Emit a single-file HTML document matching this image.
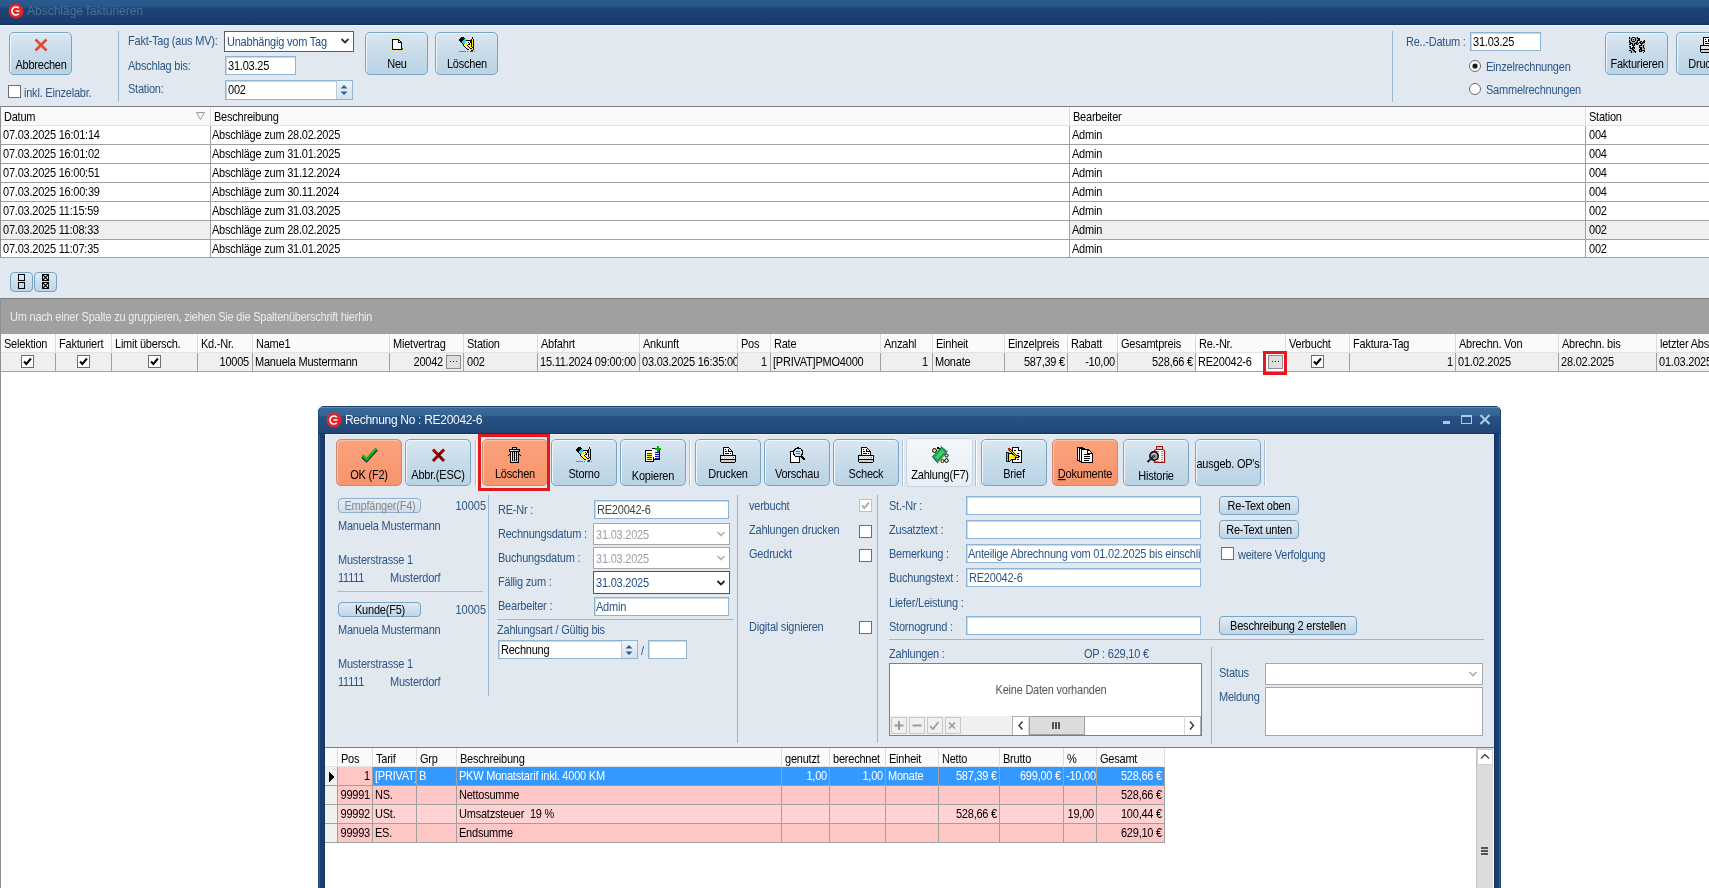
<!DOCTYPE html>
<html><head><meta charset="utf-8"><style>
*{margin:0;padding:0;box-sizing:border-box}
html,body{width:1709px;height:888px;overflow:hidden;background:#fff;position:relative}
.a{position:absolute}
.t{position:absolute;font:11px/13px "Liberation Sans",sans-serif;letter-spacing:-0.22px;white-space:nowrap;color:#000;will-change:transform;transform:scaleY(1.12);transform-origin:0 10.3px}
.btn{position:absolute;border:1px solid #7aa2c3;border-radius:5px;background:linear-gradient(#dae7f1,#c9dcea 45%,#b9d3e5);box-shadow:inset 1px 1px 0 #f2f7fb}
.obtn{position:absolute;border:1px solid #c88a74;border-radius:5px;background:linear-gradient(#fba27c,#f99b74 50%,#f7956d);box-shadow:inset 1px 1px 0 #fdc3a8}
.sbtn{position:absolute;border:1px solid #7aa2c3;border-radius:4px;background:linear-gradient(#dfeaf3,#bcd5e7)}
.inp{position:absolute;background:#fff;border:1px solid #8fb3d2;box-shadow:inset 1px 1px 0 #c8daea}
.cb{position:absolute;width:13px;height:13px;background:#fff;border:1px solid #6f6f6f}
svg{position:absolute;overflow:visible}
</style></head>
<body>
<div class="a" style="left:0px;top:0px;width:1709px;height:25px;background:linear-gradient(#2a5b8c 0,#275789 7px,#1e4374 8px,#1b3d6d 23px,#0f3366 24px,#0f3366 25px)"></div><svg style="left:8px;top:3px" width="16" height="16" viewBox="0 0 16 16"><circle cx="8" cy="8" r="7.5" fill="#e3242b"/><path d="M10.8 5.2A4 4 0 1 0 10.8 10.8" fill="none" stroke="#fff" stroke-width="1.6"/><path d="M7.5 8H11.5" stroke="#fff" stroke-width="1.4"/></svg><div class="t" style="left:27px;top:3px;font-size:12px;line-height:16px;letter-spacing:0;color:#4c7098;transform:none">Abschläge fakturieren</div><div class="a" style="left:0px;top:25px;width:1709px;height:81px;background:#e1e8f0;border-top:1px solid #eef2f7"></div><div class="btn" style="left:9px;top:32px;width:63px;height:43px"></div><svg style="left:33px;top:37px" width="16" height="16" viewBox="0 0 16 16"><path d="M2.5 2.5L13.5 13.5M13.5 2.5L2.5 13.5" stroke="#e2492e" stroke-width="2.6"/></svg><div class="t" style="left:-109.5px;width:300px;text-align:center;top:59px;">Abbrechen</div><div class="cb" style="left:8px;top:85px"></div><div class="t" style="left:24px;top:87px;color:#2b5687;">inkl. Einzelabr.</div><div class="a" style="left:118px;top:31px;width:1px;height:71px;background:#9ab6d0"></div><div class="t" style="left:128px;top:35px;color:#2b5687;">Fakt-Tag (aus MV):</div><div class="t" style="left:128px;top:60px;color:#2b5687;">Abschlag bis:</div><div class="t" style="left:128px;top:83px;color:#2b5687;">Station:</div><div class="a" style="left:224px;top:31px;width:130px;height:21px;background:#fff;border:1px solid #5e5e5e"></div><div class="t" style="left:227px;top:36px;color:#1f4e85;">Unabhängig vom Tag</div><svg style="left:340px;top:37px" width="10" height="8" viewBox="0 0 10 8"><path d="M1.5 2L5 5.5L8.5 2" fill="none" stroke="#333" stroke-width="1.8"/></svg><div class="inp" style="left:225px;top:56px;width:71px;height:19px"></div><div class="t" style="left:228px;top:60px;">31.03.25</div><div class="inp" style="left:225px;top:80px;width:128px;height:20px"></div><div class="a" style="left:336px;top:81px;width:16px;height:18px;background:linear-gradient(#eef3f8,#d6e2ee);border-left:1px solid #b9cde0"></div><svg style="left:340px;top:84px" width="8" height="12" viewBox="0 0 8 12"><path d="M0.5 4.5L4 1L7.5 4.5Z M0.5 7.5L4 11L7.5 7.5Z" fill="#2f5f91"/></svg><div class="t" style="left:228px;top:84px;">002</div><div class="btn" style="left:365px;top:32px;width:63px;height:43px"></div><svg style="left:389px;top:36px" width="16" height="15" viewBox="0 0 16 15" shape-rendering="crispEdges"><rect x="1" y="1" width="1" height="1" fill="#ffee00"/><rect x="7" y="1" width="1" height="1" fill="#ffee00"/><rect x="13" y="1" width="1" height="1" fill="#ffee00"/><rect x="2" y="2" width="1" height="1" fill="#ffee00"/><rect x="7" y="2" width="1" height="1" fill="#ffee00"/><rect x="12" y="2" width="1" height="1" fill="#ffee00"/><rect x="3" y="3" width="7" height="1" fill="#000"/><rect x="11" y="3" width="1" height="1" fill="#ffee00"/><rect x="3" y="4" width="1" height="1" fill="#000"/><rect x="4" y="4" width="5" height="1" fill="#fff"/><rect x="9" y="4" width="2" height="1" fill="#000"/><rect x="3" y="5" width="1" height="1" fill="#000"/><rect x="4" y="5" width="5" height="1" fill="#fff"/><rect x="9" y="5" width="1" height="1" fill="#000"/><rect x="10" y="5" width="1" height="1" fill="#fff"/><rect x="11" y="5" width="1" height="1" fill="#000"/><rect x="3" y="6" width="1" height="1" fill="#000"/><rect x="4" y="6" width="5" height="1" fill="#fff"/><rect x="9" y="6" width="4" height="1" fill="#000"/><rect x="1" y="7" width="2" height="1" fill="#ffee00"/><rect x="3" y="7" width="1" height="1" fill="#000"/><rect x="4" y="7" width="8" height="1" fill="#fff"/><rect x="12" y="7" width="1" height="1" fill="#000"/><rect x="13" y="7" width="2" height="1" fill="#ffee00"/><rect x="3" y="8" width="1" height="1" fill="#000"/><rect x="4" y="8" width="8" height="1" fill="#fff"/><rect x="12" y="8" width="1" height="1" fill="#000"/><rect x="3" y="9" width="1" height="1" fill="#000"/><rect x="4" y="9" width="8" height="1" fill="#fff"/><rect x="12" y="9" width="1" height="1" fill="#000"/><rect x="3" y="10" width="1" height="1" fill="#000"/><rect x="4" y="10" width="8" height="1" fill="#fff"/><rect x="12" y="10" width="1" height="1" fill="#000"/><rect x="3" y="11" width="1" height="1" fill="#000"/><rect x="4" y="11" width="8" height="1" fill="#fff"/><rect x="12" y="11" width="1" height="1" fill="#000"/><rect x="3" y="12" width="1" height="1" fill="#000"/><rect x="4" y="12" width="8" height="1" fill="#fff"/><rect x="12" y="12" width="1" height="1" fill="#000"/><rect x="13" y="12" width="1" height="1" fill="#606060"/><rect x="2" y="13" width="1" height="1" fill="#ffee00"/><rect x="3" y="13" width="10" height="1" fill="#000"/><rect x="13" y="13" width="1" height="1" fill="#606060"/><rect x="1" y="14" width="1" height="1" fill="#ffee00"/><rect x="7" y="14" width="1" height="1" fill="#ffee00"/><rect x="13" y="14" width="1" height="1" fill="#ffee00"/></svg><div class="t" style="left:247.0px;width:300px;text-align:center;top:58px;">Neu</div><div class="btn" style="left:435px;top:32px;width:63px;height:43px"></div><svg style="left:459px;top:37px" width="16" height="15" viewBox="0 0 16 15" shape-rendering="crispEdges"><rect x="2" y="0" width="3" height="1" fill="#000"/><rect x="13" y="0" width="1" height="1" fill="#000"/><rect x="1" y="1" width="5" height="1" fill="#000"/><rect x="13" y="1" width="1" height="1" fill="#000"/><rect x="0" y="2" width="5" height="1" fill="#000"/><rect x="5" y="2" width="2" height="1" fill="#00e8f0"/><rect x="12" y="2" width="1" height="1" fill="#000"/><rect x="13" y="2" width="1" height="1" fill="#ffee00"/><rect x="14" y="2" width="1" height="1" fill="#000"/><rect x="0" y="3" width="4" height="1" fill="#000"/><rect x="4" y="3" width="3" height="1" fill="#00e8f0"/><rect x="7" y="3" width="6" height="1" fill="#000"/><rect x="13" y="3" width="1" height="1" fill="#ffee00"/><rect x="14" y="3" width="1" height="1" fill="#000"/><rect x="1" y="4" width="2" height="1" fill="#000"/><rect x="3" y="4" width="4" height="1" fill="#00e8f0"/><rect x="7" y="4" width="1" height="1" fill="#ffee00"/><rect x="8" y="4" width="1" height="1" fill="#fff"/><rect x="9" y="4" width="1" height="1" fill="#ffee00"/><rect x="10" y="4" width="1" height="1" fill="#fff"/><rect x="11" y="4" width="2" height="1" fill="#000"/><rect x="13" y="4" width="1" height="1" fill="#ffee00"/><rect x="14" y="4" width="1" height="1" fill="#000"/><rect x="2" y="5" width="1" height="1" fill="#000"/><rect x="3" y="5" width="3" height="1" fill="#00e8f0"/><rect x="6" y="5" width="1" height="1" fill="#ffee00"/><rect x="7" y="5" width="1" height="1" fill="#fff"/><rect x="8" y="5" width="1" height="1" fill="#ffee00"/><rect x="9" y="5" width="1" height="1" fill="#000"/><rect x="10" y="5" width="1" height="1" fill="#fff"/><rect x="11" y="5" width="2" height="1" fill="#000"/><rect x="13" y="5" width="1" height="1" fill="#ffee00"/><rect x="14" y="5" width="1" height="1" fill="#000"/><rect x="3" y="6" width="1" height="1" fill="#000"/><rect x="4" y="6" width="2" height="1" fill="#00e8f0"/><rect x="6" y="6" width="1" height="1" fill="#fff"/><rect x="7" y="6" width="1" height="1" fill="#ffee00"/><rect x="8" y="6" width="1" height="1" fill="#fff"/><rect x="9" y="6" width="1" height="1" fill="#ffee00"/><rect x="10" y="6" width="1" height="1" fill="#000"/><rect x="11" y="6" width="1" height="1" fill="#fff"/><rect x="12" y="6" width="1" height="1" fill="#000"/><rect x="13" y="6" width="1" height="1" fill="#ffee00"/><rect x="14" y="6" width="1" height="1" fill="#000"/><rect x="4" y="7" width="1" height="1" fill="#000"/><rect x="5" y="7" width="1" height="1" fill="#ffee00"/><rect x="6" y="7" width="1" height="1" fill="#fff"/><rect x="7" y="7" width="1" height="1" fill="#ffee00"/><rect x="8" y="7" width="1" height="1" fill="#fff"/><rect x="9" y="7" width="2" height="1" fill="#000"/><rect x="11" y="7" width="1" height="1" fill="#ffee00"/><rect x="12" y="7" width="1" height="1" fill="#000"/><rect x="13" y="7" width="1" height="1" fill="#ffee00"/><rect x="14" y="7" width="1" height="1" fill="#000"/><rect x="4" y="8" width="1" height="1" fill="#000"/><rect x="5" y="8" width="1" height="1" fill="#fff"/><rect x="6" y="8" width="1" height="1" fill="#ffee00"/><rect x="7" y="8" width="1" height="1" fill="#fff"/><rect x="8" y="8" width="1" height="1" fill="#000"/><rect x="9" y="8" width="1" height="1" fill="#fff"/><rect x="10" y="8" width="1" height="1" fill="#ffee00"/><rect x="11" y="8" width="1" height="1" fill="#fff"/><rect x="12" y="8" width="1" height="1" fill="#000"/><rect x="13" y="8" width="1" height="1" fill="#ffee00"/><rect x="14" y="8" width="1" height="1" fill="#000"/><rect x="5" y="9" width="1" height="1" fill="#000"/><rect x="6" y="9" width="1" height="1" fill="#ffee00"/><rect x="7" y="9" width="1" height="1" fill="#fff"/><rect x="8" y="9" width="1" height="1" fill="#ffee00"/><rect x="9" y="9" width="1" height="1" fill="#000"/><rect x="10" y="9" width="1" height="1" fill="#fff"/><rect x="11" y="9" width="1" height="1" fill="#ffee00"/><rect x="12" y="9" width="1" height="1" fill="#000"/><rect x="13" y="9" width="1" height="1" fill="#ffee00"/><rect x="14" y="9" width="1" height="1" fill="#000"/><rect x="6" y="10" width="1" height="1" fill="#000"/><rect x="7" y="10" width="1" height="1" fill="#fff"/><rect x="8" y="10" width="1" height="1" fill="#ffee00"/><rect x="9" y="10" width="1" height="1" fill="#fff"/><rect x="10" y="10" width="1" height="1" fill="#000"/><rect x="11" y="10" width="1" height="1" fill="#ffee00"/><rect x="12" y="10" width="1" height="1" fill="#fff"/><rect x="13" y="10" width="2" height="1" fill="#000"/><rect x="7" y="11" width="1" height="1" fill="#000"/><rect x="8" y="11" width="1" height="1" fill="#ffee00"/><rect x="9" y="11" width="1" height="1" fill="#fff"/><rect x="10" y="11" width="1" height="1" fill="#ffee00"/><rect x="11" y="11" width="2" height="1" fill="#000"/><rect x="13" y="11" width="1" height="1" fill="#ffee00"/><rect x="14" y="11" width="1" height="1" fill="#000"/><rect x="8" y="12" width="2" height="1" fill="#000"/><rect x="10" y="12" width="4" height="1" fill="#ffee00"/><rect x="14" y="12" width="1" height="1" fill="#000"/><rect x="12" y="13" width="2" height="1" fill="#000"/><rect x="0" y="14" width="7" height="1" fill="#808080"/><rect x="8" y="14" width="1" height="1" fill="#808080"/><rect x="11" y="14" width="3" height="1" fill="#ff0000"/><rect x="15" y="14" width="1" height="1" fill="#808080"/></svg><div class="t" style="left:317.0px;width:300px;text-align:center;top:58px;">Löschen</div><div class="a" style="left:1392px;top:31px;width:1px;height:71px;background:#9ab6d0"></div><div class="t" style="left:1406px;top:36px;color:#2b5687;">Re..-Datum :</div><div class="inp" style="left:1470px;top:32px;width:71px;height:19px"></div><div class="t" style="left:1473px;top:36px;">31.03.25</div><svg style="left:1469px;top:60px" width="12" height="12" viewBox="0 0 12 12"><circle cx="6" cy="6" r="5.5" fill="#fff" stroke="#6a6a6a"/><circle cx="6" cy="6" r="2.6" fill="#1b1b1b"/></svg><div class="t" style="left:1486px;top:61px;color:#2b5687;">Einzelrechnungen</div><svg style="left:1469px;top:83px" width="12" height="12" viewBox="0 0 12 12"><circle cx="6" cy="6" r="5.5" fill="#fff" stroke="#6a6a6a"/></svg><div class="t" style="left:1486px;top:84px;color:#2b5687;">Sammelrechnungen</div><div class="btn" style="left:1605px;top:32px;width:63px;height:43px"></div><svg style="left:1629px;top:37px" width="16" height="16" viewBox="0 0 16 16" shape-rendering="crispEdges"><rect x="0" y="0" width="1" height="1" fill="#000"/><rect x="1" y="0" width="1" height="1" fill="#a8a8a8"/><rect x="2" y="0" width="1" height="1" fill="#e0e0e0"/><rect x="3" y="0" width="3" height="1" fill="#000"/><rect x="6" y="0" width="2" height="1" fill="#a8a8a8"/><rect x="8" y="0" width="1" height="1" fill="#000"/><rect x="0" y="1" width="1" height="1" fill="#000"/><rect x="1" y="1" width="1" height="1" fill="#a8a8a8"/><rect x="2" y="1" width="1" height="1" fill="#000"/><rect x="3" y="1" width="1" height="1" fill="#a8a8a8"/><rect x="4" y="1" width="1" height="1" fill="#e0e0e0"/><rect x="5" y="1" width="1" height="1" fill="#a8a8a8"/><rect x="6" y="1" width="1" height="1" fill="#000"/><rect x="7" y="1" width="1" height="1" fill="#a8a8a8"/><rect x="8" y="1" width="3" height="1" fill="#000"/><rect x="0" y="2" width="2" height="1" fill="#a8a8a8"/><rect x="2" y="2" width="1" height="1" fill="#000"/><rect x="3" y="2" width="1" height="1" fill="#a8a8a8"/><rect x="4" y="2" width="1" height="1" fill="#000"/><rect x="5" y="2" width="1" height="1" fill="#a8a8a8"/><rect x="6" y="2" width="1" height="1" fill="#000"/><rect x="7" y="2" width="2" height="1" fill="#a8a8a8"/><rect x="9" y="2" width="2" height="1" fill="#000"/><rect x="0" y="3" width="1" height="1" fill="#000"/><rect x="1" y="3" width="1" height="1" fill="#a8a8a8"/><rect x="2" y="3" width="1" height="1" fill="#000"/><rect x="3" y="3" width="3" height="1" fill="#a8a8a8"/><rect x="6" y="3" width="1" height="1" fill="#000"/><rect x="7" y="3" width="1" height="1" fill="#a8a8a8"/><rect x="8" y="3" width="3" height="1" fill="#000"/><rect x="15" y="3" width="1" height="1" fill="#000"/><rect x="0" y="4" width="1" height="1" fill="#000"/><rect x="1" y="4" width="2" height="1" fill="#a8a8a8"/><rect x="3" y="4" width="3" height="1" fill="#000"/><rect x="6" y="4" width="2" height="1" fill="#a8a8a8"/><rect x="8" y="4" width="1" height="1" fill="#000"/><rect x="11" y="4" width="2" height="1" fill="#000"/><rect x="14" y="4" width="2" height="1" fill="#000"/><rect x="0" y="5" width="2" height="1" fill="#000"/><rect x="2" y="5" width="5" height="1" fill="#a8a8a8"/><rect x="7" y="5" width="2" height="1" fill="#000"/><rect x="10" y="5" width="2" height="1" fill="#000"/><rect x="12" y="5" width="1" height="1" fill="#a8a8a8"/><rect x="13" y="5" width="3" height="1" fill="#000"/><rect x="0" y="6" width="1" height="1" fill="#a8a8a8"/><rect x="1" y="6" width="3" height="1" fill="#000"/><rect x="4" y="6" width="1" height="1" fill="#a8a8a8"/><rect x="5" y="6" width="3" height="1" fill="#000"/><rect x="8" y="6" width="1" height="1" fill="#a8a8a8"/><rect x="9" y="6" width="1" height="1" fill="#000"/><rect x="11" y="6" width="3" height="1" fill="#000"/><rect x="14" y="6" width="2" height="1" fill="#a8a8a8"/><rect x="0" y="7" width="2" height="1" fill="#000"/><rect x="3" y="7" width="1" height="1" fill="#000"/><rect x="4" y="7" width="1" height="1" fill="#a8a8a8"/><rect x="5" y="7" width="1" height="1" fill="#000"/><rect x="7" y="7" width="2" height="1" fill="#000"/><rect x="9" y="7" width="1" height="1" fill="#a8a8a8"/><rect x="12" y="7" width="1" height="1" fill="#000"/><rect x="13" y="7" width="1" height="1" fill="#a8a8a8"/><rect x="14" y="7" width="1" height="1" fill="#d8d8d8"/><rect x="15" y="7" width="1" height="1" fill="#a8a8a8"/><rect x="3" y="8" width="3" height="1" fill="#000"/><rect x="10" y="8" width="3" height="1" fill="#000"/><rect x="13" y="8" width="1" height="1" fill="#a8a8a8"/><rect x="14" y="8" width="1" height="1" fill="#000"/><rect x="15" y="8" width="1" height="1" fill="#a8a8a8"/><rect x="0" y="9" width="2" height="1" fill="#000"/><rect x="4" y="9" width="1" height="1" fill="#000"/><rect x="10" y="9" width="1" height="1" fill="#000"/><rect x="11" y="9" width="3" height="1" fill="#a8a8a8"/><rect x="14" y="9" width="1" height="1" fill="#000"/><rect x="15" y="9" width="1" height="1" fill="#d8d8d8"/><rect x="0" y="10" width="1" height="1" fill="#a8a8a8"/><rect x="1" y="10" width="1" height="1" fill="#000"/><rect x="3" y="10" width="3" height="1" fill="#000"/><rect x="10" y="10" width="3" height="1" fill="#000"/><rect x="13" y="10" width="1" height="1" fill="#a8a8a8"/><rect x="14" y="10" width="1" height="1" fill="#000"/><rect x="15" y="10" width="1" height="1" fill="#a8a8a8"/><rect x="0" y="11" width="1" height="1" fill="#a8a8a8"/><rect x="1" y="11" width="3" height="1" fill="#000"/><rect x="4" y="11" width="1" height="1" fill="#a8a8a8"/><rect x="5" y="11" width="1" height="1" fill="#000"/><rect x="11" y="11" width="2" height="1" fill="#000"/><rect x="13" y="11" width="2" height="1" fill="#a8a8a8"/><rect x="15" y="11" width="1" height="1" fill="#000"/><rect x="0" y="12" width="1" height="1" fill="#d8d8d8"/><rect x="1" y="12" width="2" height="1" fill="#a8a8a8"/><rect x="3" y="12" width="2" height="1" fill="#000"/><rect x="10" y="12" width="3" height="1" fill="#000"/><rect x="13" y="12" width="3" height="1" fill="#a8a8a8"/><rect x="0" y="13" width="2" height="1" fill="#000"/><rect x="2" y="13" width="2" height="1" fill="#a8a8a8"/><rect x="4" y="13" width="2" height="1" fill="#000"/><rect x="10" y="13" width="1" height="1" fill="#000"/><rect x="11" y="13" width="1" height="1" fill="#a8a8a8"/><rect x="12" y="13" width="4" height="1" fill="#000"/><rect x="0" y="14" width="1" height="1" fill="#d8d8d8"/><rect x="1" y="14" width="1" height="1" fill="#a8a8a8"/><rect x="2" y="14" width="1" height="1" fill="#000"/><rect x="3" y="14" width="2" height="1" fill="#a8a8a8"/><rect x="5" y="14" width="2" height="1" fill="#000"/><rect x="10" y="14" width="3" height="1" fill="#000"/><rect x="15" y="14" width="1" height="1" fill="#000"/><rect x="0" y="15" width="1" height="1" fill="#d8d8d8"/><rect x="1" y="15" width="1" height="1" fill="#a8a8a8"/><rect x="2" y="15" width="1" height="1" fill="#000"/><rect x="3" y="15" width="3" height="1" fill="#a8a8a8"/><rect x="6" y="15" width="1" height="1" fill="#000"/><rect x="14" y="15" width="1" height="1" fill="#000"/></svg><div class="t" style="left:1486.5px;width:300px;text-align:center;top:58px;">Fakturieren</div><div class="btn" style="left:1676px;top:32px;width:63px;height:43px"></div><svg style="left:1700px;top:37px" width="16" height="16" viewBox="0 0 16 16" shape-rendering="crispEdges"><rect x="3" y="0" width="6" height="1" fill="#000"/><rect x="3" y="1" width="1" height="1" fill="#000"/><rect x="4" y="1" width="5" height="1" fill="#fff"/><rect x="9" y="1" width="1" height="1" fill="#000"/><rect x="3" y="2" width="1" height="1" fill="#000"/><rect x="4" y="2" width="1" height="1" fill="#fff"/><rect x="5" y="2" width="1" height="1" fill="#000"/><rect x="6" y="2" width="2" height="1" fill="#fff"/><rect x="8" y="2" width="1" height="1" fill="#000"/><rect x="9" y="2" width="1" height="1" fill="#fff"/><rect x="10" y="2" width="1" height="1" fill="#000"/><rect x="3" y="3" width="1" height="1" fill="#000"/><rect x="4" y="3" width="4" height="1" fill="#fff"/><rect x="8" y="3" width="1" height="1" fill="#000"/><rect x="9" y="3" width="2" height="1" fill="#fff"/><rect x="11" y="3" width="1" height="1" fill="#000"/><rect x="3" y="4" width="1" height="1" fill="#000"/><rect x="4" y="4" width="1" height="1" fill="#fff"/><rect x="5" y="4" width="2" height="1" fill="#000"/><rect x="7" y="4" width="1" height="1" fill="#fff"/><rect x="8" y="4" width="5" height="1" fill="#000"/><rect x="3" y="5" width="1" height="1" fill="#000"/><rect x="4" y="5" width="8" height="1" fill="#fff"/><rect x="12" y="5" width="1" height="1" fill="#000"/><rect x="3" y="6" width="1" height="1" fill="#000"/><rect x="4" y="6" width="1" height="1" fill="#fff"/><rect x="5" y="6" width="4" height="1" fill="#000"/><rect x="9" y="6" width="1" height="1" fill="#fff"/><rect x="10" y="6" width="1" height="1" fill="#000"/><rect x="11" y="6" width="1" height="1" fill="#fff"/><rect x="12" y="6" width="1" height="1" fill="#000"/><rect x="3" y="7" width="1" height="1" fill="#000"/><rect x="4" y="7" width="8" height="1" fill="#fff"/><rect x="12" y="7" width="1" height="1" fill="#000"/><rect x="0" y="8" width="16" height="1" fill="#000"/><rect x="0" y="9" width="1" height="1" fill="#000"/><rect x="1" y="9" width="1" height="1" fill="#fff"/><rect x="2" y="9" width="1" height="1" fill="#c8c8c8"/><rect x="3" y="9" width="1" height="1" fill="#fff"/><rect x="4" y="9" width="1" height="1" fill="#c8c8c8"/><rect x="5" y="9" width="1" height="1" fill="#fff"/><rect x="6" y="9" width="1" height="1" fill="#c8c8c8"/><rect x="7" y="9" width="1" height="1" fill="#fff"/><rect x="8" y="9" width="1" height="1" fill="#c8c8c8"/><rect x="9" y="9" width="1" height="1" fill="#fff"/><rect x="10" y="9" width="1" height="1" fill="#c8c8c8"/><rect x="11" y="9" width="1" height="1" fill="#fff"/><rect x="12" y="9" width="1" height="1" fill="#c8c8c8"/><rect x="13" y="9" width="2" height="1" fill="#fff"/><rect x="15" y="9" width="1" height="1" fill="#000"/><rect x="0" y="10" width="1" height="1" fill="#000"/><rect x="1" y="10" width="1" height="1" fill="#c8c8c8"/><rect x="2" y="10" width="1" height="1" fill="#fff"/><rect x="3" y="10" width="1" height="1" fill="#c8c8c8"/><rect x="4" y="10" width="1" height="1" fill="#fff"/><rect x="5" y="10" width="1" height="1" fill="#c8c8c8"/><rect x="6" y="10" width="1" height="1" fill="#fff"/><rect x="7" y="10" width="1" height="1" fill="#c8c8c8"/><rect x="8" y="10" width="1" height="1" fill="#fff"/><rect x="9" y="10" width="1" height="1" fill="#c8c8c8"/><rect x="10" y="10" width="1" height="1" fill="#fff"/><rect x="11" y="10" width="1" height="1" fill="#c8c8c8"/><rect x="12" y="10" width="1" height="1" fill="#fff"/><rect x="13" y="10" width="1" height="1" fill="#ff0000"/><rect x="14" y="10" width="1" height="1" fill="#fff"/><rect x="15" y="10" width="1" height="1" fill="#000"/><rect x="0" y="11" width="1" height="1" fill="#000"/><rect x="1" y="11" width="1" height="1" fill="#fff"/><rect x="2" y="11" width="1" height="1" fill="#c8c8c8"/><rect x="3" y="11" width="1" height="1" fill="#fff"/><rect x="4" y="11" width="1" height="1" fill="#c8c8c8"/><rect x="5" y="11" width="1" height="1" fill="#fff"/><rect x="6" y="11" width="1" height="1" fill="#c8c8c8"/><rect x="7" y="11" width="1" height="1" fill="#fff"/><rect x="8" y="11" width="1" height="1" fill="#c8c8c8"/><rect x="9" y="11" width="1" height="1" fill="#fff"/><rect x="10" y="11" width="1" height="1" fill="#c8c8c8"/><rect x="11" y="11" width="1" height="1" fill="#fff"/><rect x="12" y="11" width="1" height="1" fill="#c8c8c8"/><rect x="13" y="11" width="2" height="1" fill="#fff"/><rect x="15" y="11" width="1" height="1" fill="#000"/><rect x="0" y="12" width="16" height="1" fill="#000"/><rect x="0" y="13" width="1" height="1" fill="#000"/><rect x="1" y="13" width="14" height="1" fill="#d0d0d0"/><rect x="15" y="13" width="1" height="1" fill="#000"/><rect x="0" y="14" width="1" height="1" fill="#000"/><rect x="1" y="14" width="14" height="1" fill="#d0d0d0"/><rect x="15" y="14" width="1" height="1" fill="#000"/><rect x="1" y="15" width="14" height="1" fill="#000"/></svg><div class="t" style="left:1557.5px;width:300px;text-align:center;top:58px;">Drucken</div><div class="a" style="left:0px;top:106px;width:1709px;height:152px;background:#fff"></div><div class="a" style="left:0px;top:106px;width:1709px;height:1px;background:#7b8087"></div><div class="a" style="left:0px;top:106px;width:1px;height:782px;background:#8a8f96"></div><div class="a" style="left:1px;top:107px;width:1708px;height:18px;background:#fafafa"></div><div class="a" style="left:1px;top:125px;width:1708px;height:1px;background:#e3e3e3"></div><div class="t" style="left:4px;top:111px;">Datum</div><div class="a" style="left:210px;top:107px;width:1px;height:18px;background:#dcdcdc"></div><div class="a" style="left:211px;top:107px;width:1px;height:18px;background:#ffffff"></div><div class="t" style="left:214px;top:111px;">Beschreibung</div><div class="a" style="left:1069px;top:107px;width:1px;height:18px;background:#dcdcdc"></div><div class="a" style="left:1070px;top:107px;width:1px;height:18px;background:#ffffff"></div><div class="t" style="left:1073px;top:111px;">Bearbeiter</div><div class="a" style="left:1585px;top:107px;width:1px;height:18px;background:#dcdcdc"></div><div class="a" style="left:1586px;top:107px;width:1px;height:18px;background:#ffffff"></div><div class="t" style="left:1589px;top:111px;">Station</div><svg style="left:196px;top:112px" width="9" height="8" viewBox="0 0 9 8"><path d="M0.5 0.5H8.5L4.5 7.5Z" fill="none" stroke="#9a9a9a"/></svg><div class="a" style="left:1px;top:144px;width:1708px;height:1px;background:#a0a0a0"></div><div class="t" style="left:3px;top:129px;">07.03.2025 16:01:14</div><div class="t" style="left:212px;top:129px;">Abschläge zum 28.02.2025</div><div class="t" style="left:1072px;top:129px;">Admin</div><div class="t" style="left:1589px;top:129px;">004</div><div class="a" style="left:1px;top:163px;width:1708px;height:1px;background:#a0a0a0"></div><div class="t" style="left:3px;top:148px;">07.03.2025 16:01:02</div><div class="t" style="left:212px;top:148px;">Abschläge zum 31.01.2025</div><div class="t" style="left:1072px;top:148px;">Admin</div><div class="t" style="left:1589px;top:148px;">004</div><div class="a" style="left:1px;top:182px;width:1708px;height:1px;background:#a0a0a0"></div><div class="t" style="left:3px;top:167px;">07.03.2025 16:00:51</div><div class="t" style="left:212px;top:167px;">Abschläge zum 31.12.2024</div><div class="t" style="left:1072px;top:167px;">Admin</div><div class="t" style="left:1589px;top:167px;">004</div><div class="a" style="left:1px;top:201px;width:1708px;height:1px;background:#a0a0a0"></div><div class="t" style="left:3px;top:186px;">07.03.2025 16:00:39</div><div class="t" style="left:212px;top:186px;">Abschläge zum 30.11.2024</div><div class="t" style="left:1072px;top:186px;">Admin</div><div class="t" style="left:1589px;top:186px;">004</div><div class="a" style="left:1px;top:220px;width:1708px;height:1px;background:#a0a0a0"></div><div class="t" style="left:3px;top:205px;">07.03.2025 11:15:59</div><div class="t" style="left:212px;top:205px;">Abschläge zum 31.03.2025</div><div class="t" style="left:1072px;top:205px;">Admin</div><div class="t" style="left:1589px;top:205px;">002</div><div class="a" style="left:1px;top:221px;width:209px;height:18px;background:#efefef"></div><div class="a" style="left:1070px;top:221px;width:639px;height:18px;background:#efefef"></div><div class="a" style="left:1px;top:239px;width:1708px;height:1px;background:#a0a0a0"></div><div class="t" style="left:3px;top:224px;">07.03.2025 11:08:33</div><div class="t" style="left:212px;top:224px;">Abschläge zum 28.02.2025</div><div class="t" style="left:1072px;top:224px;">Admin</div><div class="t" style="left:1589px;top:224px;">002</div><div class="a" style="left:1px;top:258px;width:1708px;height:1px;background:#a0a0a0"></div><div class="t" style="left:3px;top:243px;">07.03.2025 11:07:35</div><div class="t" style="left:212px;top:243px;">Abschläge zum 31.01.2025</div><div class="t" style="left:1072px;top:243px;">Admin</div><div class="t" style="left:1589px;top:243px;">002</div><div class="a" style="left:210px;top:126px;width:1px;height:132px;background:#a0a0a0"></div><div class="a" style="left:1069px;top:126px;width:1px;height:132px;background:#a0a0a0"></div><div class="a" style="left:1585px;top:126px;width:1px;height:132px;background:#a0a0a0"></div><div class="a" style="left:0px;top:257px;width:1709px;height:1px;background:#a0a0a0"></div><div class="a" style="left:0px;top:258px;width:1709px;height:40px;background:#e1e8f0"></div><div class="sbtn" style="left:10px;top:272px;width:23px;height:20px"></div><svg style="left:17px;top:274px" width="9" height="16" viewBox="0 0 9 16" shape-rendering="crispEdges"><rect x="1.5" y="0.5" width="6" height="6" fill="none" stroke="#000"/><rect x="1.5" y="8.5" width="6" height="6" fill="none" stroke="#000"/></svg><div class="sbtn" style="left:34px;top:272px;width:23px;height:20px"></div><svg style="left:41px;top:274px" width="9" height="16" viewBox="0 0 9 16" shape-rendering="crispEdges"><rect x="1" y="0" width="7" height="7" fill="#000"/><rect x="2" y="1" width="5" height="5" fill="#fff"/><path d="M2 1L7 6M7 1L2 6" stroke="#000" stroke-width="1.2" shape-rendering="auto"/><rect x="1" y="8" width="7" height="7" fill="#000"/><rect x="2" y="9" width="5" height="5" fill="#fff"/><path d="M2 9L7 14M7 9L2 14" stroke="#000" stroke-width="1.2" shape-rendering="auto"/></svg><div class="a" style="left:0px;top:298px;width:1709px;height:36px;background:#a0a0a0;border-top:1px solid #7d7d7d"></div><div class="t" style="left:10px;top:311px;color:#ececec;">Um nach einer Spalte zu gruppieren, ziehen Sie die Spaltenüberschrift hierhin</div><div class="a" style="left:1px;top:334px;width:1708px;height:18px;background:#fafafa"></div><div class="a" style="left:1px;top:352px;width:1708px;height:1px;background:#e3e3e3"></div><div class="a" style="left:1px;top:353px;width:1708px;height:18px;background:#efefef"></div><div class="a" style="left:1px;top:371px;width:1708px;height:1px;background:#a0a0a0"></div><div class="a" style="left:0px;top:298px;width:1px;height:590px;background:#8a8f96"></div><div class="t" style="left:4px;top:338px;">Selektion</div><div class="t" style="left:59px;top:338px;">Fakturiert</div><div class="t" style="left:115px;top:338px;">Limit übersch.</div><div class="t" style="left:201px;top:338px;">Kd.-Nr.</div><div class="t" style="left:256px;top:338px;">Name1</div><div class="t" style="left:393px;top:338px;">Mietvertrag</div><div class="t" style="left:467px;top:338px;">Station</div><div class="t" style="left:541px;top:338px;">Abfahrt</div><div class="t" style="left:643px;top:338px;">Ankunft</div><div class="t" style="left:741px;top:338px;">Pos</div><div class="t" style="left:774px;top:338px;">Rate</div><div class="t" style="left:884px;top:338px;">Anzahl</div><div class="t" style="left:936px;top:338px;">Einheit</div><div class="t" style="left:1008px;top:338px;">Einzelpreis</div><div class="t" style="left:1071px;top:338px;">Rabatt</div><div class="t" style="left:1121px;top:338px;">Gesamtpreis</div><div class="t" style="left:1199px;top:338px;">Re.-Nr.</div><div class="t" style="left:1289px;top:338px;">Verbucht</div><div class="t" style="left:1353px;top:338px;">Faktura-Tag</div><div class="t" style="left:1459px;top:338px;">Abrechn. Von</div><div class="t" style="left:1562px;top:338px;">Abrechn. bis</div><div class="t" style="left:1660px;top:338px;">letzter Abs</div><div class="a" style="left:55px;top:334px;width:1px;height:18px;background:#dcdcdc"></div><div class="a" style="left:56px;top:334px;width:1px;height:18px;background:#ffffff"></div><div class="a" style="left:55px;top:353px;width:1px;height:18px;background:#a0a0a0"></div><div class="a" style="left:111px;top:334px;width:1px;height:18px;background:#dcdcdc"></div><div class="a" style="left:112px;top:334px;width:1px;height:18px;background:#ffffff"></div><div class="a" style="left:111px;top:353px;width:1px;height:18px;background:#a0a0a0"></div><div class="a" style="left:197px;top:334px;width:1px;height:18px;background:#dcdcdc"></div><div class="a" style="left:198px;top:334px;width:1px;height:18px;background:#ffffff"></div><div class="a" style="left:197px;top:353px;width:1px;height:18px;background:#a0a0a0"></div><div class="a" style="left:252px;top:334px;width:1px;height:18px;background:#dcdcdc"></div><div class="a" style="left:253px;top:334px;width:1px;height:18px;background:#ffffff"></div><div class="a" style="left:252px;top:353px;width:1px;height:18px;background:#a0a0a0"></div><div class="a" style="left:389px;top:334px;width:1px;height:18px;background:#dcdcdc"></div><div class="a" style="left:390px;top:334px;width:1px;height:18px;background:#ffffff"></div><div class="a" style="left:389px;top:353px;width:1px;height:18px;background:#a0a0a0"></div><div class="a" style="left:463px;top:334px;width:1px;height:18px;background:#dcdcdc"></div><div class="a" style="left:464px;top:334px;width:1px;height:18px;background:#ffffff"></div><div class="a" style="left:463px;top:353px;width:1px;height:18px;background:#a0a0a0"></div><div class="a" style="left:537px;top:334px;width:1px;height:18px;background:#dcdcdc"></div><div class="a" style="left:538px;top:334px;width:1px;height:18px;background:#ffffff"></div><div class="a" style="left:537px;top:353px;width:1px;height:18px;background:#a0a0a0"></div><div class="a" style="left:639px;top:334px;width:1px;height:18px;background:#dcdcdc"></div><div class="a" style="left:640px;top:334px;width:1px;height:18px;background:#ffffff"></div><div class="a" style="left:639px;top:353px;width:1px;height:18px;background:#a0a0a0"></div><div class="a" style="left:737px;top:334px;width:1px;height:18px;background:#dcdcdc"></div><div class="a" style="left:738px;top:334px;width:1px;height:18px;background:#ffffff"></div><div class="a" style="left:737px;top:353px;width:1px;height:18px;background:#a0a0a0"></div><div class="a" style="left:770px;top:334px;width:1px;height:18px;background:#dcdcdc"></div><div class="a" style="left:771px;top:334px;width:1px;height:18px;background:#ffffff"></div><div class="a" style="left:770px;top:353px;width:1px;height:18px;background:#a0a0a0"></div><div class="a" style="left:880px;top:334px;width:1px;height:18px;background:#dcdcdc"></div><div class="a" style="left:881px;top:334px;width:1px;height:18px;background:#ffffff"></div><div class="a" style="left:880px;top:353px;width:1px;height:18px;background:#a0a0a0"></div><div class="a" style="left:932px;top:334px;width:1px;height:18px;background:#dcdcdc"></div><div class="a" style="left:933px;top:334px;width:1px;height:18px;background:#ffffff"></div><div class="a" style="left:932px;top:353px;width:1px;height:18px;background:#a0a0a0"></div><div class="a" style="left:1004px;top:334px;width:1px;height:18px;background:#dcdcdc"></div><div class="a" style="left:1005px;top:334px;width:1px;height:18px;background:#ffffff"></div><div class="a" style="left:1004px;top:353px;width:1px;height:18px;background:#a0a0a0"></div><div class="a" style="left:1067px;top:334px;width:1px;height:18px;background:#dcdcdc"></div><div class="a" style="left:1068px;top:334px;width:1px;height:18px;background:#ffffff"></div><div class="a" style="left:1067px;top:353px;width:1px;height:18px;background:#a0a0a0"></div><div class="a" style="left:1117px;top:334px;width:1px;height:18px;background:#dcdcdc"></div><div class="a" style="left:1118px;top:334px;width:1px;height:18px;background:#ffffff"></div><div class="a" style="left:1117px;top:353px;width:1px;height:18px;background:#a0a0a0"></div><div class="a" style="left:1195px;top:334px;width:1px;height:18px;background:#dcdcdc"></div><div class="a" style="left:1196px;top:334px;width:1px;height:18px;background:#ffffff"></div><div class="a" style="left:1195px;top:353px;width:1px;height:18px;background:#a0a0a0"></div><div class="a" style="left:1285px;top:334px;width:1px;height:18px;background:#dcdcdc"></div><div class="a" style="left:1286px;top:334px;width:1px;height:18px;background:#ffffff"></div><div class="a" style="left:1285px;top:353px;width:1px;height:18px;background:#a0a0a0"></div><div class="a" style="left:1349px;top:334px;width:1px;height:18px;background:#dcdcdc"></div><div class="a" style="left:1350px;top:334px;width:1px;height:18px;background:#ffffff"></div><div class="a" style="left:1349px;top:353px;width:1px;height:18px;background:#a0a0a0"></div><div class="a" style="left:1455px;top:334px;width:1px;height:18px;background:#dcdcdc"></div><div class="a" style="left:1456px;top:334px;width:1px;height:18px;background:#ffffff"></div><div class="a" style="left:1455px;top:353px;width:1px;height:18px;background:#a0a0a0"></div><div class="a" style="left:1558px;top:334px;width:1px;height:18px;background:#dcdcdc"></div><div class="a" style="left:1559px;top:334px;width:1px;height:18px;background:#ffffff"></div><div class="a" style="left:1558px;top:353px;width:1px;height:18px;background:#a0a0a0"></div><div class="a" style="left:1656px;top:334px;width:1px;height:18px;background:#dcdcdc"></div><div class="a" style="left:1657px;top:334px;width:1px;height:18px;background:#ffffff"></div><div class="a" style="left:1656px;top:353px;width:1px;height:18px;background:#a0a0a0"></div><div class="a" style="left:1196px;top:353px;width:89px;height:18px;background:#fff"></div><div class="cb" style="left:21px;top:355px"></div><svg style="left:21px;top:355px" width="13" height="13" viewBox="0 0 13 13"><path d="M3 6.5L5.3 9L10 3.5" fill="none" stroke="#000" stroke-width="2"/></svg><div class="cb" style="left:77px;top:355px"></div><svg style="left:77px;top:355px" width="13" height="13" viewBox="0 0 13 13"><path d="M3 6.5L5.3 9L10 3.5" fill="none" stroke="#000" stroke-width="2"/></svg><div class="cb" style="left:148px;top:355px"></div><svg style="left:148px;top:355px" width="13" height="13" viewBox="0 0 13 13"><path d="M3 6.5L5.3 9L10 3.5" fill="none" stroke="#000" stroke-width="2"/></svg><div class="cb" style="left:1311px;top:355px"></div><svg style="left:1311px;top:355px" width="13" height="13" viewBox="0 0 13 13"><path d="M3 6.5L5.3 9L10 3.5" fill="none" stroke="#000" stroke-width="2"/></svg><div class="t" style="left:-51px;width:300px;text-align:right;top:356px;">10005</div><div class="t" style="left:255px;top:356px;">Manuela Mustermann</div><div class="t" style="left:143px;width:300px;text-align:right;top:356px;">20042</div><div class="a" style="left:446px;top:355px;width:15px;height:14px;background:#dedede;border:1px solid #8c8c8c"></div><svg style="left:450px;top:361px" width="8" height="1" shape-rendering="crispEdges"><rect x="0" width="1" height="1" fill="#222"/><rect x="3" width="1" height="1" fill="#222"/><rect x="6" width="1" height="1" fill="#222"/></svg><div class="t" style="left:467px;top:356px;">002</div><div class="a" style="left:538px;top:353px;width:101px;height:18px;overflow:hidden"><div class="t" style="left:2px;top:3px">15.11.2024 09:00:00</div></div><div class="a" style="left:640px;top:353px;width:97px;height:18px;overflow:hidden"><div class="t" style="left:2px;top:3px">03.03.2025 16:35:00</div></div><div class="t" style="left:467px;width:300px;text-align:right;top:356px;">1</div><div class="t" style="left:773px;top:356px;">[PRIVAT]PMO4000</div><div class="t" style="left:628px;width:300px;text-align:right;top:356px;">1</div><div class="t" style="left:935px;top:356px;">Monate</div><div class="t" style="left:765px;width:300px;text-align:right;top:356px;">587,39 €</div><div class="t" style="left:815px;width:300px;text-align:right;top:356px;">-10,00</div><div class="t" style="left:893px;width:300px;text-align:right;top:356px;">528,66 €</div><div class="t" style="left:1198px;top:356px;">RE20042-6</div><div class="a" style="left:1268px;top:355px;width:15px;height:14px;background:#dedede;border:1px solid #8c8c8c"></div><svg style="left:1272px;top:361px" width="8" height="1" shape-rendering="crispEdges"><rect x="0" width="1" height="1" fill="#222"/><rect x="3" width="1" height="1" fill="#222"/><rect x="6" width="1" height="1" fill="#222"/></svg><div class="a" style="left:1263px;top:351px;width:24px;height:24px;border:3px solid #e5171f"></div><div class="t" style="left:1153px;width:300px;text-align:right;top:356px;">1</div><div class="t" style="left:1458px;top:356px;">01.02.2025</div><div class="t" style="left:1561px;top:356px;">28.02.2025</div><div class="t" style="left:1659px;top:356px;">01.03.2025</div>
<div class="a" style="left:318px;top:406px;width:1183px;height:482px;background:#1b3d6b;border-radius:6px 6px 0 0;overflow:hidden"><div class="a" style="left:0;top:0;width:1183px;height:28px;background:linear-gradient(#1e3f6a 0,#1e3f6a 1px,#5a8ab8 1px,#5a8ab8 2px,#3a6a9a 2px,#346492 10px,#275485 10px,#1f4576 27px,#0f3366 27px)"></div><div class="a" style="left:0;top:0;width:1px;height:482px;background:#1c4577"></div><div class="a" style="left:1px;top:28px;width:1px;height:454px;background:#2f5f91"></div><div class="a" style="left:6px;top:28px;width:1px;height:454px;background:#0f3366"></div><div class="a" style="left:1176px;top:28px;width:1px;height:454px;background:#0f3366"></div><div class="a" style="left:1181px;top:28px;width:1px;height:454px;background:#2f5f91"></div><div class="a" style="left:1182px;top:0px;width:1px;height:482px;background:#1c4577"></div></div><svg style="left:326px;top:412px" width="16" height="16" viewBox="0 0 16 16"><circle cx="8" cy="8" r="7.5" fill="#e3242b"/><path d="M10.8 5.2A4 4 0 1 0 10.8 10.8" fill="none" stroke="#fff" stroke-width="1.6"/><path d="M7.5 8H11.5" stroke="#fff" stroke-width="1.4"/></svg><div class="t" style="left:345px;top:412px;font-size:12px;line-height:16px;letter-spacing:-0.3px;color:#f4f8fc;transform:none">Rechnung No : RE20042-6</div><svg style="left:1440px;top:412px" width="54" height="16" viewBox="0 0 54 16" shape-rendering="crispEdges"><rect x="3" y="9" width="7" height="3" fill="#a9cbe9"/><rect x="21.5" y="3.5" width="10" height="8" fill="none" stroke="#a9cbe9"/><rect x="21" y="3" width="11" height="2" fill="#a9cbe9"/></svg><svg style="left:1479px;top:414px" width="12" height="11" viewBox="0 0 12 11"><path d="M1.5 1L10.5 10M10.5 1L1.5 10" stroke="#a9cbe9" stroke-width="2.2"/></svg><div class="a" style="left:325px;top:434px;width:1169px;height:454px;background:#e1e8f0;border-top:1px solid #eef2f7;border-left:1px solid #eef2f7"></div><div class="obtn" style="left:336px;top:439px;width:66px;height:47px"></div><svg style="left:361px;top:447px" width="17" height="16" viewBox="0 0 17 16"><path d="M1.5 9.5L5.5 13.5L15.5 2.5" fill="none" stroke="#000088" stroke-width="3.2"/><path d="M1.5 8.5L5.5 12.5L15.5 1.5" fill="none" stroke="#00c000" stroke-width="2.6"/></svg><div class="t" style="left:219.0px;width:300px;text-align:center;top:469px;">OK (F2)</div><div class="btn" style="left:405px;top:439px;width:66px;height:47px"></div><svg style="left:431px;top:447px" width="15" height="16" viewBox="0 0 15 16"><path d="M2 2.5L13 14M13 2.5L2 14" stroke="#7a0000" stroke-width="3"/><path d="M2 2L6 6M13 2.5L9.5 6" stroke="#ff0000" stroke-width="1" opacity="0.7"/></svg><div class="t" style="left:288.0px;width:300px;text-align:center;top:469px;">Abbr.(ESC)</div><div class="a" style="left:475px;top:440px;width:1px;height:46px;background:#a9c0d6"></div><div class="a" style="left:476px;top:440px;width:1px;height:46px;background:#ffffff"></div><div class="obtn" style="left:482px;top:439px;width:66px;height:47px"></div><svg style="left:506px;top:447px" width="18" height="16" viewBox="0 0 18 16" shape-rendering="crispEdges"><rect x="6" y="0" width="5" height="1" fill="#000"/><rect x="6" y="1" width="1" height="1" fill="#000"/><rect x="7" y="1" width="3" height="1" fill="#c8c8c8"/><rect x="10" y="1" width="1" height="1" fill="#000"/><rect x="3" y="2" width="11" height="1" fill="#000"/><rect x="3" y="3" width="1" height="1" fill="#000"/><rect x="4" y="3" width="3" height="1" fill="#fff"/><rect x="7" y="3" width="6" height="1" fill="#c8c8c8"/><rect x="13" y="3" width="1" height="1" fill="#000"/><rect x="3" y="4" width="11" height="1" fill="#000"/><rect x="4" y="5" width="1" height="1" fill="#000"/><rect x="5" y="5" width="1" height="1" fill="#fff"/><rect x="6" y="5" width="1" height="1" fill="#000"/><rect x="7" y="5" width="1" height="1" fill="#c8c8c8"/><rect x="8" y="5" width="1" height="1" fill="#000"/><rect x="9" y="5" width="1" height="1" fill="#c8c8c8"/><rect x="10" y="5" width="1" height="1" fill="#000"/><rect x="11" y="5" width="1" height="1" fill="#c8c8c8"/><rect x="12" y="5" width="1" height="1" fill="#000"/><rect x="4" y="6" width="1" height="1" fill="#000"/><rect x="5" y="6" width="1" height="1" fill="#fff"/><rect x="6" y="6" width="1" height="1" fill="#000"/><rect x="7" y="6" width="1" height="1" fill="#c8c8c8"/><rect x="8" y="6" width="1" height="1" fill="#000"/><rect x="9" y="6" width="1" height="1" fill="#c8c8c8"/><rect x="10" y="6" width="1" height="1" fill="#000"/><rect x="11" y="6" width="1" height="1" fill="#c8c8c8"/><rect x="12" y="6" width="1" height="1" fill="#000"/><rect x="3" y="7" width="2" height="1" fill="#000"/><rect x="5" y="7" width="1" height="1" fill="#fff"/><rect x="6" y="7" width="1" height="1" fill="#000"/><rect x="7" y="7" width="1" height="1" fill="#c8c8c8"/><rect x="8" y="7" width="1" height="1" fill="#000"/><rect x="9" y="7" width="1" height="1" fill="#fff"/><rect x="10" y="7" width="1" height="1" fill="#000"/><rect x="11" y="7" width="1" height="1" fill="#c8c8c8"/><rect x="12" y="7" width="2" height="1" fill="#000"/><rect x="2" y="8" width="1" height="1" fill="#000"/><rect x="4" y="8" width="1" height="1" fill="#000"/><rect x="5" y="8" width="1" height="1" fill="#fff"/><rect x="6" y="8" width="1" height="1" fill="#000"/><rect x="7" y="8" width="1" height="1" fill="#c8c8c8"/><rect x="8" y="8" width="1" height="1" fill="#000"/><rect x="9" y="8" width="1" height="1" fill="#c8c8c8"/><rect x="10" y="8" width="1" height="1" fill="#000"/><rect x="11" y="8" width="1" height="1" fill="#c8c8c8"/><rect x="12" y="8" width="1" height="1" fill="#000"/><rect x="14" y="8" width="1" height="1" fill="#000"/><rect x="4" y="9" width="1" height="1" fill="#000"/><rect x="5" y="9" width="1" height="1" fill="#fff"/><rect x="6" y="9" width="1" height="1" fill="#000"/><rect x="7" y="9" width="1" height="1" fill="#c8c8c8"/><rect x="8" y="9" width="1" height="1" fill="#000"/><rect x="9" y="9" width="1" height="1" fill="#fff"/><rect x="10" y="9" width="1" height="1" fill="#000"/><rect x="11" y="9" width="1" height="1" fill="#c8c8c8"/><rect x="12" y="9" width="1" height="1" fill="#000"/><rect x="4" y="10" width="1" height="1" fill="#000"/><rect x="5" y="10" width="1" height="1" fill="#fff"/><rect x="6" y="10" width="1" height="1" fill="#000"/><rect x="7" y="10" width="1" height="1" fill="#c8c8c8"/><rect x="8" y="10" width="1" height="1" fill="#000"/><rect x="9" y="10" width="1" height="1" fill="#c8c8c8"/><rect x="10" y="10" width="1" height="1" fill="#000"/><rect x="11" y="10" width="1" height="1" fill="#c8c8c8"/><rect x="12" y="10" width="1" height="1" fill="#000"/><rect x="4" y="11" width="1" height="1" fill="#000"/><rect x="5" y="11" width="1" height="1" fill="#fff"/><rect x="6" y="11" width="1" height="1" fill="#000"/><rect x="7" y="11" width="1" height="1" fill="#c8c8c8"/><rect x="8" y="11" width="1" height="1" fill="#000"/><rect x="9" y="11" width="1" height="1" fill="#fff"/><rect x="10" y="11" width="1" height="1" fill="#000"/><rect x="11" y="11" width="1" height="1" fill="#c8c8c8"/><rect x="12" y="11" width="1" height="1" fill="#000"/><rect x="4" y="12" width="1" height="1" fill="#000"/><rect x="5" y="12" width="1" height="1" fill="#fff"/><rect x="6" y="12" width="1" height="1" fill="#000"/><rect x="7" y="12" width="1" height="1" fill="#c8c8c8"/><rect x="8" y="12" width="1" height="1" fill="#000"/><rect x="9" y="12" width="1" height="1" fill="#c8c8c8"/><rect x="10" y="12" width="1" height="1" fill="#000"/><rect x="11" y="12" width="1" height="1" fill="#c8c8c8"/><rect x="12" y="12" width="1" height="1" fill="#000"/><rect x="4" y="13" width="1" height="1" fill="#000"/><rect x="5" y="13" width="1" height="1" fill="#fff"/><rect x="6" y="13" width="1" height="1" fill="#000"/><rect x="7" y="13" width="1" height="1" fill="#c8c8c8"/><rect x="8" y="13" width="1" height="1" fill="#000"/><rect x="9" y="13" width="1" height="1" fill="#c8c8c8"/><rect x="10" y="13" width="1" height="1" fill="#000"/><rect x="11" y="13" width="1" height="1" fill="#c8c8c8"/><rect x="12" y="13" width="1" height="1" fill="#000"/><rect x="4" y="14" width="1" height="1" fill="#000"/><rect x="5" y="14" width="2" height="1" fill="#fff"/><rect x="7" y="14" width="5" height="1" fill="#c8c8c8"/><rect x="12" y="14" width="1" height="1" fill="#000"/><rect x="4" y="15" width="9" height="1" fill="#000"/></svg><div class="t" style="left:365.0px;width:300px;text-align:center;top:468px;">Löschen</div><div class="a" style="left:478px;top:434px;width:72px;height:57px;border:3px solid #e5171f"></div><div class="btn" style="left:551px;top:439px;width:66px;height:47px"></div><svg style="left:576px;top:447px" width="16" height="15" viewBox="0 0 16 15" shape-rendering="crispEdges"><rect x="2" y="0" width="3" height="1" fill="#000"/><rect x="13" y="0" width="1" height="1" fill="#000"/><rect x="1" y="1" width="5" height="1" fill="#000"/><rect x="13" y="1" width="1" height="1" fill="#000"/><rect x="0" y="2" width="5" height="1" fill="#000"/><rect x="5" y="2" width="2" height="1" fill="#00e8f0"/><rect x="12" y="2" width="1" height="1" fill="#000"/><rect x="13" y="2" width="1" height="1" fill="#ffee00"/><rect x="14" y="2" width="1" height="1" fill="#000"/><rect x="0" y="3" width="4" height="1" fill="#000"/><rect x="4" y="3" width="3" height="1" fill="#00e8f0"/><rect x="7" y="3" width="6" height="1" fill="#000"/><rect x="13" y="3" width="1" height="1" fill="#ffee00"/><rect x="14" y="3" width="1" height="1" fill="#000"/><rect x="1" y="4" width="2" height="1" fill="#000"/><rect x="3" y="4" width="4" height="1" fill="#00e8f0"/><rect x="7" y="4" width="1" height="1" fill="#ffee00"/><rect x="8" y="4" width="1" height="1" fill="#fff"/><rect x="9" y="4" width="1" height="1" fill="#ffee00"/><rect x="10" y="4" width="1" height="1" fill="#fff"/><rect x="11" y="4" width="2" height="1" fill="#000"/><rect x="13" y="4" width="1" height="1" fill="#ffee00"/><rect x="14" y="4" width="1" height="1" fill="#000"/><rect x="2" y="5" width="1" height="1" fill="#000"/><rect x="3" y="5" width="3" height="1" fill="#00e8f0"/><rect x="6" y="5" width="1" height="1" fill="#ffee00"/><rect x="7" y="5" width="1" height="1" fill="#fff"/><rect x="8" y="5" width="1" height="1" fill="#ffee00"/><rect x="9" y="5" width="1" height="1" fill="#000"/><rect x="10" y="5" width="1" height="1" fill="#fff"/><rect x="11" y="5" width="2" height="1" fill="#000"/><rect x="13" y="5" width="1" height="1" fill="#ffee00"/><rect x="14" y="5" width="1" height="1" fill="#000"/><rect x="3" y="6" width="1" height="1" fill="#000"/><rect x="4" y="6" width="2" height="1" fill="#00e8f0"/><rect x="6" y="6" width="1" height="1" fill="#fff"/><rect x="7" y="6" width="1" height="1" fill="#ffee00"/><rect x="8" y="6" width="1" height="1" fill="#fff"/><rect x="9" y="6" width="1" height="1" fill="#ffee00"/><rect x="10" y="6" width="1" height="1" fill="#000"/><rect x="11" y="6" width="1" height="1" fill="#fff"/><rect x="12" y="6" width="1" height="1" fill="#000"/><rect x="13" y="6" width="1" height="1" fill="#ffee00"/><rect x="14" y="6" width="1" height="1" fill="#000"/><rect x="4" y="7" width="1" height="1" fill="#000"/><rect x="5" y="7" width="1" height="1" fill="#ffee00"/><rect x="6" y="7" width="1" height="1" fill="#fff"/><rect x="7" y="7" width="1" height="1" fill="#ffee00"/><rect x="8" y="7" width="1" height="1" fill="#fff"/><rect x="9" y="7" width="2" height="1" fill="#000"/><rect x="11" y="7" width="1" height="1" fill="#ffee00"/><rect x="12" y="7" width="1" height="1" fill="#000"/><rect x="13" y="7" width="1" height="1" fill="#ffee00"/><rect x="14" y="7" width="1" height="1" fill="#000"/><rect x="4" y="8" width="1" height="1" fill="#000"/><rect x="5" y="8" width="1" height="1" fill="#fff"/><rect x="6" y="8" width="1" height="1" fill="#ffee00"/><rect x="7" y="8" width="1" height="1" fill="#fff"/><rect x="8" y="8" width="1" height="1" fill="#000"/><rect x="9" y="8" width="1" height="1" fill="#fff"/><rect x="10" y="8" width="1" height="1" fill="#ffee00"/><rect x="11" y="8" width="1" height="1" fill="#fff"/><rect x="12" y="8" width="1" height="1" fill="#000"/><rect x="13" y="8" width="1" height="1" fill="#ffee00"/><rect x="14" y="8" width="1" height="1" fill="#000"/><rect x="5" y="9" width="1" height="1" fill="#000"/><rect x="6" y="9" width="1" height="1" fill="#ffee00"/><rect x="7" y="9" width="1" height="1" fill="#fff"/><rect x="8" y="9" width="1" height="1" fill="#ffee00"/><rect x="9" y="9" width="1" height="1" fill="#000"/><rect x="10" y="9" width="1" height="1" fill="#fff"/><rect x="11" y="9" width="1" height="1" fill="#ffee00"/><rect x="12" y="9" width="1" height="1" fill="#000"/><rect x="13" y="9" width="1" height="1" fill="#ffee00"/><rect x="14" y="9" width="1" height="1" fill="#000"/><rect x="6" y="10" width="1" height="1" fill="#000"/><rect x="7" y="10" width="1" height="1" fill="#fff"/><rect x="8" y="10" width="1" height="1" fill="#ffee00"/><rect x="9" y="10" width="1" height="1" fill="#fff"/><rect x="10" y="10" width="1" height="1" fill="#000"/><rect x="11" y="10" width="1" height="1" fill="#ffee00"/><rect x="12" y="10" width="1" height="1" fill="#fff"/><rect x="13" y="10" width="2" height="1" fill="#000"/><rect x="7" y="11" width="1" height="1" fill="#000"/><rect x="8" y="11" width="1" height="1" fill="#ffee00"/><rect x="9" y="11" width="1" height="1" fill="#fff"/><rect x="10" y="11" width="1" height="1" fill="#ffee00"/><rect x="11" y="11" width="2" height="1" fill="#000"/><rect x="13" y="11" width="1" height="1" fill="#ffee00"/><rect x="14" y="11" width="1" height="1" fill="#000"/><rect x="8" y="12" width="2" height="1" fill="#000"/><rect x="10" y="12" width="4" height="1" fill="#ffee00"/><rect x="14" y="12" width="1" height="1" fill="#000"/><rect x="12" y="13" width="2" height="1" fill="#000"/><rect x="0" y="14" width="7" height="1" fill="#808080"/><rect x="8" y="14" width="1" height="1" fill="#808080"/><rect x="11" y="14" width="3" height="1" fill="#ff0000"/><rect x="15" y="14" width="1" height="1" fill="#808080"/></svg><div class="t" style="left:434.0px;width:300px;text-align:center;top:468px;">Storno</div><div class="btn" style="left:620px;top:439px;width:66px;height:47px"></div><svg style="left:645px;top:446px" width="17" height="16" viewBox="0 0 17 16" shape-rendering="crispEdges"><path d="M0.5 4.5H8.5V15.5H0.5Z" fill="#fff" stroke="#000"/><path d="M2 7H7M2 9H7M2 11H7M2 13H7" stroke="#1a1aa0"/><path d="M2 8H7M2 10H7M2 12H7" stroke="#ffee00"/><path d="M6.5 2.5H14.5V13.5H9" fill="#fff" stroke="#000"/><path d="M10 6H14M10 8H14M10 10H14M10 12H14" stroke="#1a1aa0"/><path d="M10 7H14M10 9H14M10 11H14" stroke="#ffee00"/><path d="M13 0V6M10 3H16" stroke="#00b000" stroke-width="2"/></svg><div class="t" style="left:503.0px;width:300px;text-align:center;top:470px;">Kopieren</div><div class="a" style="left:689px;top:440px;width:1px;height:46px;background:#a9c0d6"></div><div class="a" style="left:690px;top:440px;width:1px;height:46px;background:#ffffff"></div><div class="btn" style="left:695px;top:439px;width:66px;height:47px"></div><svg style="left:720px;top:447px" width="16" height="16" viewBox="0 0 16 16" shape-rendering="crispEdges"><rect x="3" y="0" width="6" height="1" fill="#000"/><rect x="3" y="1" width="1" height="1" fill="#000"/><rect x="4" y="1" width="5" height="1" fill="#fff"/><rect x="9" y="1" width="1" height="1" fill="#000"/><rect x="3" y="2" width="1" height="1" fill="#000"/><rect x="4" y="2" width="1" height="1" fill="#fff"/><rect x="5" y="2" width="1" height="1" fill="#000"/><rect x="6" y="2" width="2" height="1" fill="#fff"/><rect x="8" y="2" width="1" height="1" fill="#000"/><rect x="9" y="2" width="1" height="1" fill="#fff"/><rect x="10" y="2" width="1" height="1" fill="#000"/><rect x="3" y="3" width="1" height="1" fill="#000"/><rect x="4" y="3" width="4" height="1" fill="#fff"/><rect x="8" y="3" width="1" height="1" fill="#000"/><rect x="9" y="3" width="2" height="1" fill="#fff"/><rect x="11" y="3" width="1" height="1" fill="#000"/><rect x="3" y="4" width="1" height="1" fill="#000"/><rect x="4" y="4" width="1" height="1" fill="#fff"/><rect x="5" y="4" width="2" height="1" fill="#000"/><rect x="7" y="4" width="1" height="1" fill="#fff"/><rect x="8" y="4" width="5" height="1" fill="#000"/><rect x="3" y="5" width="1" height="1" fill="#000"/><rect x="4" y="5" width="8" height="1" fill="#fff"/><rect x="12" y="5" width="1" height="1" fill="#000"/><rect x="3" y="6" width="1" height="1" fill="#000"/><rect x="4" y="6" width="1" height="1" fill="#fff"/><rect x="5" y="6" width="4" height="1" fill="#000"/><rect x="9" y="6" width="1" height="1" fill="#fff"/><rect x="10" y="6" width="1" height="1" fill="#000"/><rect x="11" y="6" width="1" height="1" fill="#fff"/><rect x="12" y="6" width="1" height="1" fill="#000"/><rect x="3" y="7" width="1" height="1" fill="#000"/><rect x="4" y="7" width="8" height="1" fill="#fff"/><rect x="12" y="7" width="1" height="1" fill="#000"/><rect x="0" y="8" width="16" height="1" fill="#000"/><rect x="0" y="9" width="1" height="1" fill="#000"/><rect x="1" y="9" width="1" height="1" fill="#fff"/><rect x="2" y="9" width="1" height="1" fill="#c8c8c8"/><rect x="3" y="9" width="1" height="1" fill="#fff"/><rect x="4" y="9" width="1" height="1" fill="#c8c8c8"/><rect x="5" y="9" width="1" height="1" fill="#fff"/><rect x="6" y="9" width="1" height="1" fill="#c8c8c8"/><rect x="7" y="9" width="1" height="1" fill="#fff"/><rect x="8" y="9" width="1" height="1" fill="#c8c8c8"/><rect x="9" y="9" width="1" height="1" fill="#fff"/><rect x="10" y="9" width="1" height="1" fill="#c8c8c8"/><rect x="11" y="9" width="1" height="1" fill="#fff"/><rect x="12" y="9" width="1" height="1" fill="#c8c8c8"/><rect x="13" y="9" width="2" height="1" fill="#fff"/><rect x="15" y="9" width="1" height="1" fill="#000"/><rect x="0" y="10" width="1" height="1" fill="#000"/><rect x="1" y="10" width="1" height="1" fill="#c8c8c8"/><rect x="2" y="10" width="1" height="1" fill="#fff"/><rect x="3" y="10" width="1" height="1" fill="#c8c8c8"/><rect x="4" y="10" width="1" height="1" fill="#fff"/><rect x="5" y="10" width="1" height="1" fill="#c8c8c8"/><rect x="6" y="10" width="1" height="1" fill="#fff"/><rect x="7" y="10" width="1" height="1" fill="#c8c8c8"/><rect x="8" y="10" width="1" height="1" fill="#fff"/><rect x="9" y="10" width="1" height="1" fill="#c8c8c8"/><rect x="10" y="10" width="1" height="1" fill="#fff"/><rect x="11" y="10" width="1" height="1" fill="#c8c8c8"/><rect x="12" y="10" width="1" height="1" fill="#fff"/><rect x="13" y="10" width="1" height="1" fill="#ff0000"/><rect x="14" y="10" width="1" height="1" fill="#fff"/><rect x="15" y="10" width="1" height="1" fill="#000"/><rect x="0" y="11" width="1" height="1" fill="#000"/><rect x="1" y="11" width="1" height="1" fill="#fff"/><rect x="2" y="11" width="1" height="1" fill="#c8c8c8"/><rect x="3" y="11" width="1" height="1" fill="#fff"/><rect x="4" y="11" width="1" height="1" fill="#c8c8c8"/><rect x="5" y="11" width="1" height="1" fill="#fff"/><rect x="6" y="11" width="1" height="1" fill="#c8c8c8"/><rect x="7" y="11" width="1" height="1" fill="#fff"/><rect x="8" y="11" width="1" height="1" fill="#c8c8c8"/><rect x="9" y="11" width="1" height="1" fill="#fff"/><rect x="10" y="11" width="1" height="1" fill="#c8c8c8"/><rect x="11" y="11" width="1" height="1" fill="#fff"/><rect x="12" y="11" width="1" height="1" fill="#c8c8c8"/><rect x="13" y="11" width="2" height="1" fill="#fff"/><rect x="15" y="11" width="1" height="1" fill="#000"/><rect x="0" y="12" width="16" height="1" fill="#000"/><rect x="0" y="13" width="1" height="1" fill="#000"/><rect x="1" y="13" width="14" height="1" fill="#d0d0d0"/><rect x="15" y="13" width="1" height="1" fill="#000"/><rect x="0" y="14" width="1" height="1" fill="#000"/><rect x="1" y="14" width="14" height="1" fill="#d0d0d0"/><rect x="15" y="14" width="1" height="1" fill="#000"/><rect x="1" y="15" width="14" height="1" fill="#000"/></svg><div class="t" style="left:578.0px;width:300px;text-align:center;top:468px;">Drucken</div><div class="btn" style="left:764px;top:439px;width:66px;height:47px"></div><svg style="left:790px;top:447px" width="16" height="16" viewBox="0 0 16 16" shape-rendering="crispEdges"><path d="M0.5 4.5H7L9 6.5V15.5H0.5Z" fill="#fff" stroke="#000"/><circle cx="8" cy="5.5" r="4.5" fill="#bfe6f2" stroke="#000" stroke-width="1.2"/><path d="M6 4H10M6 6H10" stroke="#00a0c0"/><path d="M11 9L15 13" stroke="#000" stroke-width="2"/></svg><div class="t" style="left:647.0px;width:300px;text-align:center;top:468px;">Vorschau</div><div class="btn" style="left:833px;top:439px;width:66px;height:47px"></div><svg style="left:858px;top:447px" width="16" height="16" viewBox="0 0 16 16" shape-rendering="crispEdges"><rect x="3" y="0" width="6" height="1" fill="#000"/><rect x="3" y="1" width="1" height="1" fill="#000"/><rect x="4" y="1" width="5" height="1" fill="#fff"/><rect x="9" y="1" width="1" height="1" fill="#000"/><rect x="3" y="2" width="1" height="1" fill="#000"/><rect x="4" y="2" width="1" height="1" fill="#fff"/><rect x="5" y="2" width="1" height="1" fill="#000"/><rect x="6" y="2" width="2" height="1" fill="#fff"/><rect x="8" y="2" width="1" height="1" fill="#000"/><rect x="9" y="2" width="1" height="1" fill="#fff"/><rect x="10" y="2" width="1" height="1" fill="#000"/><rect x="3" y="3" width="1" height="1" fill="#000"/><rect x="4" y="3" width="4" height="1" fill="#fff"/><rect x="8" y="3" width="1" height="1" fill="#000"/><rect x="9" y="3" width="2" height="1" fill="#fff"/><rect x="11" y="3" width="1" height="1" fill="#000"/><rect x="3" y="4" width="1" height="1" fill="#000"/><rect x="4" y="4" width="1" height="1" fill="#fff"/><rect x="5" y="4" width="2" height="1" fill="#000"/><rect x="7" y="4" width="1" height="1" fill="#fff"/><rect x="8" y="4" width="5" height="1" fill="#000"/><rect x="3" y="5" width="1" height="1" fill="#000"/><rect x="4" y="5" width="8" height="1" fill="#fff"/><rect x="12" y="5" width="1" height="1" fill="#000"/><rect x="3" y="6" width="1" height="1" fill="#000"/><rect x="4" y="6" width="1" height="1" fill="#fff"/><rect x="5" y="6" width="4" height="1" fill="#000"/><rect x="9" y="6" width="1" height="1" fill="#fff"/><rect x="10" y="6" width="1" height="1" fill="#000"/><rect x="11" y="6" width="1" height="1" fill="#fff"/><rect x="12" y="6" width="1" height="1" fill="#000"/><rect x="3" y="7" width="1" height="1" fill="#000"/><rect x="4" y="7" width="8" height="1" fill="#fff"/><rect x="12" y="7" width="1" height="1" fill="#000"/><rect x="0" y="8" width="16" height="1" fill="#000"/><rect x="0" y="9" width="1" height="1" fill="#000"/><rect x="1" y="9" width="1" height="1" fill="#fff"/><rect x="2" y="9" width="1" height="1" fill="#c8c8c8"/><rect x="3" y="9" width="1" height="1" fill="#fff"/><rect x="4" y="9" width="1" height="1" fill="#c8c8c8"/><rect x="5" y="9" width="1" height="1" fill="#fff"/><rect x="6" y="9" width="1" height="1" fill="#c8c8c8"/><rect x="7" y="9" width="1" height="1" fill="#fff"/><rect x="8" y="9" width="1" height="1" fill="#c8c8c8"/><rect x="9" y="9" width="1" height="1" fill="#fff"/><rect x="10" y="9" width="1" height="1" fill="#c8c8c8"/><rect x="11" y="9" width="1" height="1" fill="#fff"/><rect x="12" y="9" width="1" height="1" fill="#c8c8c8"/><rect x="13" y="9" width="2" height="1" fill="#fff"/><rect x="15" y="9" width="1" height="1" fill="#000"/><rect x="0" y="10" width="1" height="1" fill="#000"/><rect x="1" y="10" width="1" height="1" fill="#c8c8c8"/><rect x="2" y="10" width="1" height="1" fill="#fff"/><rect x="3" y="10" width="1" height="1" fill="#c8c8c8"/><rect x="4" y="10" width="1" height="1" fill="#fff"/><rect x="5" y="10" width="1" height="1" fill="#c8c8c8"/><rect x="6" y="10" width="1" height="1" fill="#fff"/><rect x="7" y="10" width="1" height="1" fill="#c8c8c8"/><rect x="8" y="10" width="1" height="1" fill="#fff"/><rect x="9" y="10" width="1" height="1" fill="#c8c8c8"/><rect x="10" y="10" width="1" height="1" fill="#fff"/><rect x="11" y="10" width="1" height="1" fill="#c8c8c8"/><rect x="12" y="10" width="1" height="1" fill="#fff"/><rect x="13" y="10" width="1" height="1" fill="#ff0000"/><rect x="14" y="10" width="1" height="1" fill="#fff"/><rect x="15" y="10" width="1" height="1" fill="#000"/><rect x="0" y="11" width="1" height="1" fill="#000"/><rect x="1" y="11" width="1" height="1" fill="#fff"/><rect x="2" y="11" width="1" height="1" fill="#c8c8c8"/><rect x="3" y="11" width="1" height="1" fill="#fff"/><rect x="4" y="11" width="1" height="1" fill="#c8c8c8"/><rect x="5" y="11" width="1" height="1" fill="#fff"/><rect x="6" y="11" width="1" height="1" fill="#c8c8c8"/><rect x="7" y="11" width="1" height="1" fill="#fff"/><rect x="8" y="11" width="1" height="1" fill="#c8c8c8"/><rect x="9" y="11" width="1" height="1" fill="#fff"/><rect x="10" y="11" width="1" height="1" fill="#c8c8c8"/><rect x="11" y="11" width="1" height="1" fill="#fff"/><rect x="12" y="11" width="1" height="1" fill="#c8c8c8"/><rect x="13" y="11" width="2" height="1" fill="#fff"/><rect x="15" y="11" width="1" height="1" fill="#000"/><rect x="0" y="12" width="16" height="1" fill="#000"/><rect x="0" y="13" width="1" height="1" fill="#000"/><rect x="1" y="13" width="14" height="1" fill="#d0d0d0"/><rect x="15" y="13" width="1" height="1" fill="#000"/><rect x="0" y="14" width="1" height="1" fill="#000"/><rect x="1" y="14" width="14" height="1" fill="#d0d0d0"/><rect x="15" y="14" width="1" height="1" fill="#000"/><rect x="1" y="15" width="14" height="1" fill="#000"/></svg><div class="t" style="left:716.0px;width:300px;text-align:center;top:468px;">Scheck</div><div class="a" style="left:902px;top:440px;width:1px;height:46px;background:#a9c0d6"></div><div class="a" style="left:903px;top:440px;width:1px;height:46px;background:#ffffff"></div><div class="a" style="left:906px;top:438px;width:67px;height:49px;border:1px solid #c4d6e5;border-radius:4px;background:linear-gradient(#f3f7fa,#e8eff5)"></div><svg style="left:932px;top:447px" width="17" height="16" viewBox="0 0 17 16"><path d="M9.5 0L15 4.5L5.5 15.5L0.5 10Z" fill="#1fa84a" stroke="#0b5f62" stroke-width="1.2" stroke-dasharray="1 0.6"/><path d="M9.5 2.5L12.5 5L5.5 12.5L3 10.5Z" fill="#45d060"/><circle cx="2.5" cy="3.5" r="2" fill="#f0e84a" stroke="#000" stroke-width="1"/><rect x="5" y="0" width="2" height="2" fill="#000"/><rect x="7" y="1" width="1" height="1.5" fill="#000"/><circle cx="14.5" cy="8.5" r="1.6" fill="#e8e8e8" stroke="#000" stroke-width="1"/><circle cx="14.5" cy="13.5" r="1.8" fill="#e8e8e8" stroke="#000" stroke-width="1"/><circle cx="10.5" cy="14" r="1.6" fill="#f0e84a" stroke="#000" stroke-width="0.8"/></svg><div class="t" style="left:789.5px;width:300px;text-align:center;top:469px;">Zahlung(F7)</div><div class="a" style="left:975px;top:440px;width:1px;height:46px;background:#a9c0d6"></div><div class="a" style="left:976px;top:440px;width:1px;height:46px;background:#ffffff"></div><div class="btn" style="left:981px;top:439px;width:66px;height:47px"></div><svg style="left:1005px;top:447px" width="18" height="16" viewBox="0 0 18 16" shape-rendering="crispEdges"><path d="M7.5 0.5H13.5L16.5 3.5V15.5H7.5Z" fill="#fff" stroke="#000"/><path d="M13.5 0.5V3.5H16.5" fill="#fff" stroke="#000"/><path d="M9 3H11M12 6H14M12 9H15M9 12H10M12 12H14" stroke="#000"/><path d="M1 5H3V14H1Z" fill="#00e8f0" stroke="#000" stroke-width="0.8"/><path d="M3 6H6L9 8H13V10H10V12H7L5 14H3Z" fill="#ffee00" stroke="#000" stroke-width="1"/><path d="M5 8H8M6 11H9" stroke="#fff" stroke-width="0.8"/><path d="M3.5 1.5L11 9" stroke="#000" stroke-width="2.2" shape-rendering="auto"/><path d="M3.5 1.5L11 9" stroke="#ffee00" stroke-width="1" shape-rendering="auto"/><rect x="2.5" y="0.5" width="2" height="2" fill="#ff0000"/></svg><div class="t" style="left:864.0px;width:300px;text-align:center;top:468px;">Brief</div><div class="obtn" style="left:1052px;top:439px;width:66px;height:47px"></div><svg style="left:1077px;top:447px" width="16" height="16" viewBox="0 0 16 16" shape-rendering="crispEdges"><path d="M0.5 0.5H5.5V13.5H0.5Z" fill="#fff" stroke="#000"/><path d="M2.5 1.5H7.5V14.5H2.5Z" fill="#fff" stroke="#000"/><path d="M4.5 2.5H11L15.5 6.5V15.5H4.5Z" fill="#fff" stroke="#000"/><path d="M7 7H13M7 9H13M7 11H13M7 13H12" stroke="#000"/><path d="M10.5 2.5V6.5H15" fill="none" stroke="#000"/></svg><div class="t" style="left:935.0px;width:300px;text-align:center;top:468px;"><span style="text-decoration:underline">D</span>okumente</div><div class="btn" style="left:1123px;top:439px;width:66px;height:47px"></div><svg style="left:1147px;top:446px" width="18" height="17" viewBox="0 0 18 17"><rect x="9.5" y="0.5" width="6" height="3" fill="#ccc" stroke="#a01010" stroke-width="1"/><path d="M7.5 5.5Q7.5 3.5 9.5 3.5H15.5Q17.5 3.5 17.5 5.5V16.5H7.5Z" fill="#fff" stroke="#a01010" stroke-width="1.2"/><path d="M9 5V16M11 5V16M15 5V16" stroke="#b01818" stroke-width="1.2" stroke-dasharray="1 1"/><path d="M13 4.5V16" stroke="#fff" stroke-width="1.4"/><circle cx="7" cy="10" r="4.2" fill="#9a9a9a" stroke="#000" stroke-width="1.4"/><path d="M5.5 8.5A2 2 0 0 1 8.5 8" stroke="#ddd" fill="none" stroke-width="1"/><path d="M7.5 9.5L0.5 16" stroke="#000" stroke-width="1.8"/><path d="M7 10L1 15.5" stroke="#fff" stroke-width="0.7" stroke-dasharray="1 1"/></svg><div class="t" style="left:1006.0px;width:300px;text-align:center;top:470px;">Historie</div><div class="btn" style="left:1195px;top:439px;width:66px;height:47px"></div><div class="t" style="left:1078.0px;width:300px;text-align:center;top:458px;">ausgeb. OP's</div><div class="a" style="left:1264px;top:440px;width:1px;height:46px;background:#a9c0d6"></div><div class="a" style="left:1265px;top:440px;width:1px;height:46px;background:#ffffff"></div><div class="a" style="left:338px;top:498px;width:83px;height:15px;border:1px solid #8fb0cc;border-radius:4px;background:linear-gradient(#e6eef5,#cddeec)"></div><div class="t" style="left:229.5px;width:300px;text-align:center;top:500px;color:#8a8a8a;">Empfänger(F4)</div><div class="t" style="left:186px;width:300px;text-align:right;top:500px;color:#2b5687;letter-spacing:0">10005</div><div class="t" style="left:338px;top:520px;color:#2b5687;">Manuela Mustermann</div><div class="t" style="left:338px;top:554px;color:#2b5687;">Musterstrasse 1</div><div class="t" style="left:338px;top:572px;color:#2b5687;">11111</div><div class="t" style="left:390px;top:572px;color:#2b5687;">Musterdorf</div><div class="a" style="left:337px;top:591px;width:146px;height:1px;background:#a3bdd4"></div><div class="a" style="left:338px;top:602px;width:83px;height:15px;border:1px solid #7aa2c3;border-radius:4px;background:linear-gradient(#dfeaf3,#bfd6e8)"></div><div class="t" style="left:229.5px;width:300px;text-align:center;top:604px;">Kunde(F5)</div><div class="t" style="left:186px;width:300px;text-align:right;top:604px;color:#2b5687;letter-spacing:0">10005</div><div class="t" style="left:338px;top:624px;color:#2b5687;">Manuela Mustermann</div><div class="t" style="left:338px;top:658px;color:#2b5687;">Musterstrasse 1</div><div class="t" style="left:338px;top:676px;color:#2b5687;">11111</div><div class="t" style="left:390px;top:676px;color:#2b5687;">Musterdorf</div><div class="a" style="left:488px;top:495px;width:1px;height:201px;background:#9ab6d0"></div><div class="t" style="left:498px;top:504px;color:#2b5687;">RE-Nr :</div><div class="t" style="left:498px;top:528px;color:#2b5687;">Rechnungsdatum :</div><div class="t" style="left:498px;top:552px;color:#2b5687;">Buchungsdatum :</div><div class="t" style="left:498px;top:576px;color:#2b5687;">Fällig zum :</div><div class="t" style="left:498px;top:600px;color:#2b5687;">Bearbeiter :</div><div class="inp" style="left:594px;top:500px;width:135px;height:19px"></div><div class="t" style="left:597px;top:504px;color:#444;">RE20042-6</div><div class="a" style="left:593px;top:523px;width:137px;height:22px;background:#fff;border:1px solid #a7a7a7"></div><div class="t" style="left:596px;top:529px;color:#a0a0a0;">31.03.2025</div><svg style="left:716px;top:530px" width="10" height="8" viewBox="0 0 10 8"><path d="M1.5 2L5 5.5L8.5 2" fill="none" stroke="#b0b0b0" stroke-width="1.6"/></svg><div class="a" style="left:593px;top:547px;width:137px;height:22px;background:#fff;border:1px solid #a7a7a7"></div><div class="t" style="left:596px;top:553px;color:#a0a0a0;">31.03.2025</div><svg style="left:716px;top:554px" width="10" height="8" viewBox="0 0 10 8"><path d="M1.5 2L5 5.5L8.5 2" fill="none" stroke="#b0b0b0" stroke-width="1.6"/></svg><div class="a" style="left:593px;top:571px;width:137px;height:23px;background:#fff;border:1px solid #555"></div><div class="t" style="left:596px;top:577px;color:#1f4e85;">31.03.2025</div><svg style="left:716px;top:579px" width="10" height="8" viewBox="0 0 10 8"><path d="M1.5 2L5 5.5L8.5 2" fill="none" stroke="#222" stroke-width="1.8"/></svg><div class="inp" style="left:594px;top:597px;width:135px;height:19px"></div><div class="t" style="left:596px;top:601px;color:#2b5687;">Admin</div><div class="a" style="left:497px;top:619px;width:237px;height:1px;background:#9ab6d0"></div><div class="t" style="left:497px;top:624px;color:#2b5687;">Zahlungsart / Gültig bis</div><div class="inp" style="left:498px;top:640px;width:140px;height:19px"></div><div class="a" style="left:621px;top:641px;width:16px;height:17px;background:linear-gradient(#eef3f8,#d6e2ee);border-left:1px solid #b9cde0"></div><svg style="left:625px;top:644px" width="8" height="12" viewBox="0 0 8 12"><path d="M0.5 4.5L4 1L7.5 4.5Z M0.5 7.5L4 11L7.5 7.5Z" fill="#2f5f91"/></svg><div class="t" style="left:501px;top:644px;">Rechnung</div><div class="t" style="left:641px;top:645px;color:#2b5687;">/</div><div class="inp" style="left:648px;top:640px;width:39px;height:19px"></div><div class="a" style="left:737px;top:495px;width:1px;height:248px;background:#9ab6d0"></div><div class="t" style="left:749px;top:500px;color:#2b5687;">verbucht</div><div class="t" style="left:749px;top:524px;color:#2b5687;">Zahlungen drucken</div><div class="t" style="left:749px;top:548px;color:#2b5687;">Gedruckt</div><div class="t" style="left:749px;top:621px;color:#2b5687;">Digital signieren</div><div class="cb" style="left:859px;top:499px;border-color:#c0c0c0"></div><svg style="left:859px;top:499px" width="13" height="13" viewBox="0 0 13 13"><path d="M3 6.5L5.3 9L10 3.5" fill="none" stroke="#b0b0b0" stroke-width="2"/></svg><div class="cb" style="left:859px;top:525px"></div><div class="cb" style="left:859px;top:549px"></div><div class="cb" style="left:859px;top:621px"></div><div class="a" style="left:877px;top:495px;width:1px;height:248px;background:#9ab6d0"></div><div class="t" style="left:889px;top:500px;color:#2b5687;">St.-Nr :</div><div class="t" style="left:889px;top:524px;color:#2b5687;">Zusatztext :</div><div class="t" style="left:889px;top:548px;color:#2b5687;">Bemerkung :</div><div class="t" style="left:889px;top:572px;color:#2b5687;">Buchungstext :</div><div class="t" style="left:889px;top:597px;color:#2b5687;">Liefer/Leistung :</div><div class="t" style="left:889px;top:621px;color:#2b5687;">Stornogrund :</div><div class="inp" style="left:966px;top:496px;width:235px;height:19px"></div><div class="inp" style="left:966px;top:520px;width:235px;height:19px"></div><div class="inp" style="left:966px;top:544px;width:235px;height:19px"></div><div class="inp" style="left:966px;top:568px;width:235px;height:19px"></div><div class="inp" style="left:966px;top:616px;width:235px;height:19px"></div><div class="a" style="left:967px;top:545px;width:233px;height:17px;overflow:hidden"><div class="t" style="left:1px;top:3px;color:#2b5687">Anteilige Abrechnung vom 01.02.2025 bis einschließlich 28.02.2025</div></div><div class="t" style="left:969px;top:572px;color:#2b5687;">RE20042-6</div><div class="a" style="left:1219px;top:496px;width:80px;height:19px;border:1px solid #7aa2c3;border-radius:4px;background:linear-gradient(#dfeaf3,#bfd6e8)"></div><div class="t" style="left:1109.0px;width:300px;text-align:center;top:500px;">Re-Text oben</div><div class="a" style="left:1219px;top:520px;width:80px;height:19px;border:1px solid #7aa2c3;border-radius:4px;background:linear-gradient(#dfeaf3,#bfd6e8)"></div><div class="t" style="left:1109.0px;width:300px;text-align:center;top:524px;">Re-Text unten</div><div class="cb" style="left:1221px;top:547px"></div><div class="t" style="left:1238px;top:549px;color:#2b5687;">weitere Verfolgung</div><div class="a" style="left:1219px;top:616px;width:138px;height:19px;border:1px solid #7aa2c3;border-radius:4px;background:linear-gradient(#dfeaf3,#bfd6e8)"></div><div class="t" style="left:1138.0px;width:300px;text-align:center;top:620px;">Beschreibung 2 erstellen</div><div class="a" style="left:889px;top:639px;width:595px;height:1px;background:#9ab6d0"></div><div class="t" style="left:889px;top:648px;color:#2b5687;">Zahlungen :</div><div class="t" style="left:1084px;top:648px;color:#2b5687;">OP : 629,10 €</div><div class="a" style="left:889px;top:663px;width:313px;height:73px;background:#fff;border:1px solid #7b7f86"></div><div class="t" style="left:901.0px;width:300px;text-align:center;top:684px;color:#555;">Keine Daten vorhanden</div><div class="a" style="left:890px;top:716px;width:311px;height:19px;background:#f0f0f0"></div><div class="a" style="left:891px;top:717px;width:16px;height:17px;border:1px solid #c8c8c8;background:#f0f0f0"></div><div class="a" style="left:909px;top:717px;width:16px;height:17px;border:1px solid #c8c8c8;background:#f0f0f0"></div><div class="a" style="left:927px;top:717px;width:16px;height:17px;border:1px solid #c8c8c8;background:#f0f0f0"></div><div class="a" style="left:945px;top:717px;width:16px;height:17px;border:1px solid #c8c8c8;background:#f0f0f0"></div><svg style="left:891px;top:717px" width="72" height="17" viewBox="0 0 72 17"><path d="M8 4V13M3.5 8.5H12.5" stroke="#9a9a9a" stroke-width="2"/><path d="M21.5 8.5H30.5" stroke="#9a9a9a" stroke-width="2"/><path d="M39 9L42 12L47.5 5" fill="none" stroke="#9a9a9a" stroke-width="1.6"/><path d="M58 5.5L64 11.5M64 5.5L58 11.5" stroke="#9a9a9a" stroke-width="1.6"/></svg><div class="a" style="left:1012px;top:716px;width:189px;height:19px;background:#fff;border:1px solid #b0b0b0;border-bottom:0"></div><div class="a" style="left:1029px;top:716px;width:56px;height:19px;background:#dcdcdc;border:1px solid #a0a0a0"></div><div class="a" style="left:1028px;top:716px;width:1px;height:19px;background:#d8d8d8"></div><div class="a" style="left:1184px;top:716px;width:1px;height:19px;background:#d8d8d8"></div><svg style="left:1012px;top:716px" width="189" height="19" viewBox="0 0 189 19"><path d="M10.5 5.5L7 9.5L10.5 13.5" fill="none" stroke="#333" stroke-width="1.4"/><path d="M178 5.5L181.5 9.5L178 13.5" fill="none" stroke="#333" stroke-width="1.4"/><path d="M41 6V13M44 6V13M47 6V13" stroke="#555" stroke-width="2" shape-rendering="crispEdges"/></svg><div class="a" style="left:1211px;top:647px;width:1px;height:97px;background:#9ab6d0"></div><div class="t" style="left:1219px;top:667px;color:#2b5687;">Status</div><div class="t" style="left:1219px;top:691px;color:#2b5687;">Meldung</div><div class="a" style="left:1265px;top:663px;width:218px;height:22px;background:#fff;border:1px solid #a7a7a7"></div><svg style="left:1468px;top:670px" width="10" height="8" viewBox="0 0 10 8"><path d="M1.5 2L5 5.5L8.5 2" fill="none" stroke="#b0b0b0" stroke-width="1.6"/></svg><div class="a" style="left:1265px;top:687px;width:218px;height:49px;background:#fff;border:1px solid #a7a7a7"></div><div class="a" style="left:325px;top:747px;width:1169px;height:141px;background:#fff"></div><div class="a" style="left:325px;top:747px;width:1169px;height:1px;background:#7b8087"></div><div class="a" style="left:325px;top:748px;width:839px;height:18px;background:#fafafa"></div><div class="a" style="left:325px;top:766px;width:839px;height:1px;background:#e3e3e3"></div><div class="t" style="left:341px;top:753px;">Pos</div><div class="t" style="left:376px;top:753px;">Tarif</div><div class="t" style="left:420px;top:753px;">Grp</div><div class="t" style="left:460px;top:753px;">Beschreibung</div><div class="t" style="left:785px;top:753px;">genutzt</div><div class="t" style="left:833px;top:753px;">berechnet</div><div class="t" style="left:889px;top:753px;">Einheit</div><div class="t" style="left:942px;top:753px;">Netto</div><div class="t" style="left:1003px;top:753px;">Brutto</div><div class="t" style="left:1067px;top:753px;">%</div><div class="t" style="left:1100px;top:753px;">Gesamt</div><div class="a" style="left:337px;top:748px;width:1px;height:18px;background:#dcdcdc"></div><div class="a" style="left:338px;top:748px;width:1px;height:18px;background:#fff"></div><div class="a" style="left:372px;top:748px;width:1px;height:18px;background:#dcdcdc"></div><div class="a" style="left:373px;top:748px;width:1px;height:18px;background:#fff"></div><div class="a" style="left:416px;top:748px;width:1px;height:18px;background:#dcdcdc"></div><div class="a" style="left:417px;top:748px;width:1px;height:18px;background:#fff"></div><div class="a" style="left:456px;top:748px;width:1px;height:18px;background:#dcdcdc"></div><div class="a" style="left:457px;top:748px;width:1px;height:18px;background:#fff"></div><div class="a" style="left:781px;top:748px;width:1px;height:18px;background:#dcdcdc"></div><div class="a" style="left:782px;top:748px;width:1px;height:18px;background:#fff"></div><div class="a" style="left:829px;top:748px;width:1px;height:18px;background:#dcdcdc"></div><div class="a" style="left:830px;top:748px;width:1px;height:18px;background:#fff"></div><div class="a" style="left:885px;top:748px;width:1px;height:18px;background:#dcdcdc"></div><div class="a" style="left:886px;top:748px;width:1px;height:18px;background:#fff"></div><div class="a" style="left:938px;top:748px;width:1px;height:18px;background:#dcdcdc"></div><div class="a" style="left:939px;top:748px;width:1px;height:18px;background:#fff"></div><div class="a" style="left:999px;top:748px;width:1px;height:18px;background:#dcdcdc"></div><div class="a" style="left:1000px;top:748px;width:1px;height:18px;background:#fff"></div><div class="a" style="left:1063px;top:748px;width:1px;height:18px;background:#dcdcdc"></div><div class="a" style="left:1064px;top:748px;width:1px;height:18px;background:#fff"></div><div class="a" style="left:1096px;top:748px;width:1px;height:18px;background:#dcdcdc"></div><div class="a" style="left:1097px;top:748px;width:1px;height:18px;background:#fff"></div><div class="a" style="left:1164px;top:748px;width:1px;height:18px;background:#dcdcdc"></div><div class="a" style="left:325px;top:767px;width:12px;height:18px;background:#f0f0f0"></div><div class="a" style="left:338px;top:767px;width:826px;height:18px;background:#ffc6c6"></div><div class="a" style="left:373px;top:767px;width:791px;height:18px;background:#3399ff"></div><div class="a" style="left:325px;top:785px;width:839px;height:1px;background:#a0a0a0"></div><div class="t" style="left:70px;width:300px;text-align:right;top:770px;color:#000;">1</div><div class="a" style="left:373px;top:767px;width:43px;height:18px;overflow:hidden"><div class="t" style="left:2px;top:3px;color:#fff">[PRIVAT]PMO4000</div></div><div class="a" style="left:417px;top:767px;width:39px;height:18px;overflow:hidden"><div class="t" style="left:2px;top:3px;color:#fff">B</div></div><div class="a" style="left:457px;top:767px;width:324px;height:18px;overflow:hidden"><div class="t" style="left:2px;top:3px;color:#fff">PKW Monatstarif inkl. 4000 KM</div></div><div class="t" style="left:527px;width:300px;text-align:right;top:770px;color:#fff;">1,00</div><div class="t" style="left:583px;width:300px;text-align:right;top:770px;color:#fff;">1,00</div><div class="a" style="left:886px;top:767px;width:52px;height:18px;overflow:hidden"><div class="t" style="left:2px;top:3px;color:#fff">Monate</div></div><div class="t" style="left:697px;width:300px;text-align:right;top:770px;color:#fff;">587,39 €</div><div class="t" style="left:761px;width:300px;text-align:right;top:770px;color:#fff;">699,00 €</div><div class="a" style="left:1064px;top:767px;width:32px;height:18px;overflow:hidden"><div class="t" style="left:2px;top:3px;color:#fff">-10,000</div></div><div class="t" style="left:862px;width:300px;text-align:right;top:770px;color:#fff;">528,66 €</div><div class="a" style="left:325px;top:786px;width:12px;height:18px;background:#f0f0f0"></div><div class="a" style="left:338px;top:786px;width:826px;height:18px;background:#ffc6c6"></div><div class="a" style="left:325px;top:804px;width:839px;height:1px;background:#a0a0a0"></div><div class="t" style="left:70px;width:300px;text-align:right;top:789px;color:#000;">99991</div><div class="a" style="left:373px;top:786px;width:43px;height:18px;overflow:hidden"><div class="t" style="left:2px;top:3px;color:#000">NS.</div></div><div class="a" style="left:457px;top:786px;width:324px;height:18px;overflow:hidden"><div class="t" style="left:2px;top:3px;color:#000">Nettosumme</div></div><div class="t" style="left:862px;width:300px;text-align:right;top:789px;color:#000;">528,66 €</div><div class="a" style="left:325px;top:805px;width:12px;height:18px;background:#f0f0f0"></div><div class="a" style="left:338px;top:805px;width:826px;height:18px;background:#ffd3d3"></div><div class="a" style="left:325px;top:823px;width:839px;height:1px;background:#a0a0a0"></div><div class="t" style="left:70px;width:300px;text-align:right;top:808px;color:#000;">99992</div><div class="a" style="left:373px;top:805px;width:43px;height:18px;overflow:hidden"><div class="t" style="left:2px;top:3px;color:#000">USt.</div></div><div class="a" style="left:457px;top:805px;width:324px;height:18px;overflow:hidden"><div class="t" style="left:2px;top:3px;color:#000">Umsatzsteuer&nbsp; 19 %</div></div><div class="t" style="left:697px;width:300px;text-align:right;top:808px;color:#000;">528,66 €</div><div class="t" style="left:794px;width:300px;text-align:right;top:808px;color:#000;">19,00</div><div class="t" style="left:862px;width:300px;text-align:right;top:808px;color:#000;">100,44 €</div><div class="a" style="left:325px;top:824px;width:12px;height:18px;background:#f0f0f0"></div><div class="a" style="left:338px;top:824px;width:826px;height:18px;background:#ffc6c6"></div><div class="a" style="left:325px;top:842px;width:839px;height:1px;background:#a0a0a0"></div><div class="t" style="left:70px;width:300px;text-align:right;top:827px;color:#000;">99993</div><div class="a" style="left:373px;top:824px;width:43px;height:18px;overflow:hidden"><div class="t" style="left:2px;top:3px;color:#000">ES.</div></div><div class="a" style="left:457px;top:824px;width:324px;height:18px;overflow:hidden"><div class="t" style="left:2px;top:3px;color:#000">Endsumme</div></div><div class="t" style="left:862px;width:300px;text-align:right;top:827px;color:#000;">629,10 €</div><div class="a" style="left:337px;top:767px;width:1px;height:76px;background:#a0a0a0"></div><div class="a" style="left:372px;top:767px;width:1px;height:76px;background:#a0a0a0"></div><div class="a" style="left:416px;top:767px;width:1px;height:76px;background:#a0a0a0"></div><div class="a" style="left:456px;top:767px;width:1px;height:76px;background:#a0a0a0"></div><div class="a" style="left:781px;top:767px;width:1px;height:76px;background:#a0a0a0"></div><div class="a" style="left:829px;top:767px;width:1px;height:76px;background:#a0a0a0"></div><div class="a" style="left:885px;top:767px;width:1px;height:76px;background:#a0a0a0"></div><div class="a" style="left:938px;top:767px;width:1px;height:76px;background:#a0a0a0"></div><div class="a" style="left:999px;top:767px;width:1px;height:76px;background:#a0a0a0"></div><div class="a" style="left:1063px;top:767px;width:1px;height:76px;background:#a0a0a0"></div><div class="a" style="left:1096px;top:767px;width:1px;height:76px;background:#a0a0a0"></div><div class="a" style="left:1164px;top:767px;width:1px;height:76px;background:#a0a0a0"></div><svg style="left:329px;top:772px" width="6" height="10" viewBox="0 0 6 10" shape-rendering="crispEdges"><path d="M0 0L5 5L0 10Z" fill="#000"/></svg><div class="a" style="left:1476px;top:748px;width:17px;height:140px;background:#dcdcdc;border-left:1px solid #c4c4c4"></div><div class="a" style="left:1477px;top:749px;width:16px;height:16px;background:#fff;border:1px solid #d0d0d0"></div><svg style="left:1477px;top:749px" width="16" height="16" viewBox="0 0 16 16"><path d="M4 9.5L8 5.5L12 9.5" fill="none" stroke="#444" stroke-width="1.4"/></svg><svg style="left:1480px;top:847px" width="10" height="9" viewBox="0 0 10 9" shape-rendering="crispEdges"><path d="M1 1H8M1 4H8M1 7H8" stroke="#555" stroke-width="1.5"/></svg>
</body></html>
